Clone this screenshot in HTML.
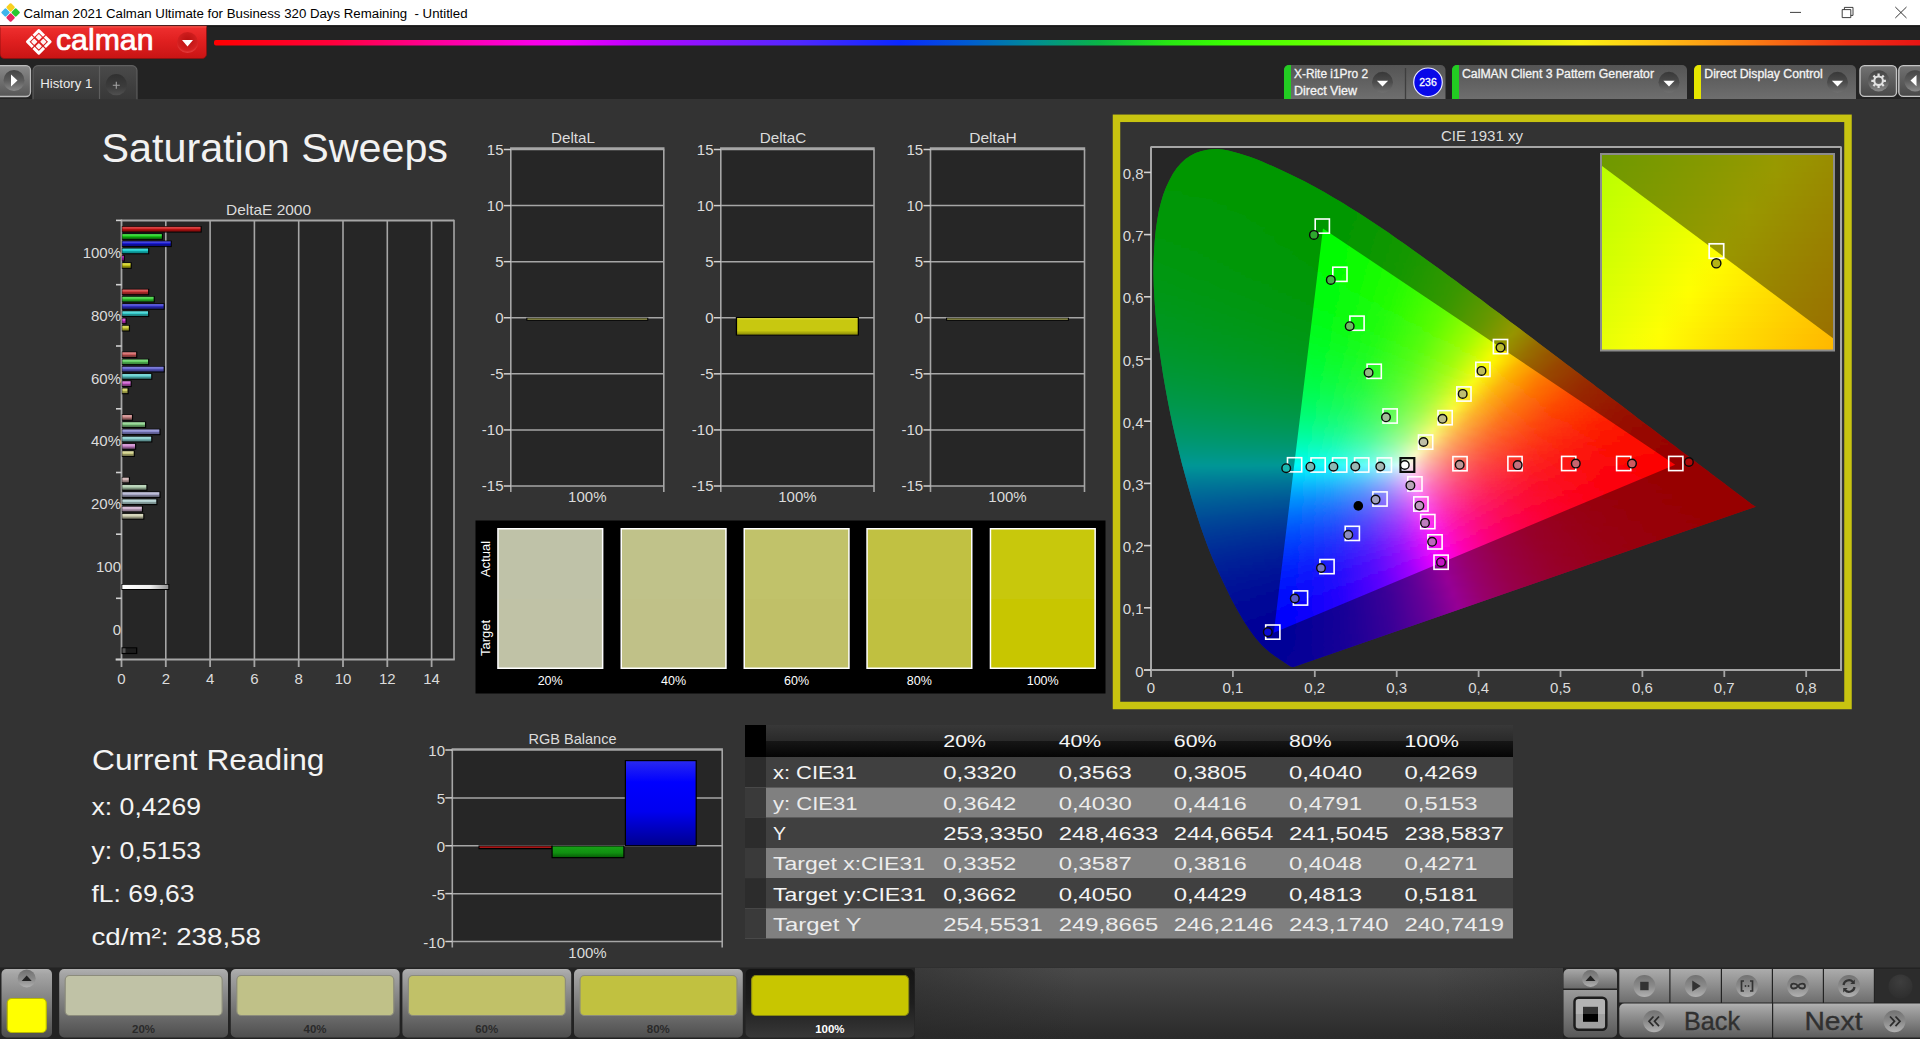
<!DOCTYPE html>
<html lang="en"><head><meta charset="utf-8"><title>Calman 2021 - Saturation Sweeps</title>
<style>
html,body{margin:0;padding:0;background:#333;overflow:hidden}
body{width:1920px;height:1039px;position:relative;font-family:'Liberation Sans', sans-serif}
svg{position:absolute;left:0;top:0;display:block}
text{font-family:'Liberation Sans', sans-serif;white-space:pre}
</style></head><body>
<svg width="1920" height="1039" viewBox="0 0 1920 1039">
<defs><linearGradient id="g1" x1="214" y1="0" x2="1920" y2="0" gradientUnits="userSpaceOnUse"><stop offset="0" stop-color="#ff0000"/><stop offset="0.07" stop-color="#ff003c"/><stop offset="0.128" stop-color="#ff0096"/><stop offset="0.187" stop-color="#fa00e6"/><stop offset="0.207" stop-color="#f000fa"/><stop offset="0.246" stop-color="#be00ff"/><stop offset="0.285" stop-color="#8c14ff"/><stop offset="0.343" stop-color="#5028ff"/><stop offset="0.402" stop-color="#0a28ff"/><stop offset="0.441" stop-color="#005ad2"/><stop offset="0.48" stop-color="#008c96"/><stop offset="0.519" stop-color="#0ab446"/><stop offset="0.559" stop-color="#28e614"/><stop offset="0.597" stop-color="#3cff00"/><stop offset="0.656" stop-color="#6eff00"/><stop offset="0.715" stop-color="#aaf414"/><stop offset="0.742" stop-color="#bef00a"/><stop offset="0.801" stop-color="#faf014"/><stop offset="0.84" stop-color="#ffc814"/><stop offset="0.899" stop-color="#fa8214"/><stop offset="0.957" stop-color="#f03214"/><stop offset="1" stop-color="#e61414"/></linearGradient><linearGradient id="g2" x1="0" y1="0" x2="0" y2="1"><stop offset="0" stop-color="#f03030"/><stop offset="0.45" stop-color="#e02020"/><stop offset="1" stop-color="#c81414"/></linearGradient><radialGradient id="g3" cx="0.5" cy="0.4" r="0.6"><stop offset="0" stop-color="#b81010"/><stop offset="0.8" stop-color="#d42020"/><stop offset="1" stop-color="#e84040"/></radialGradient><linearGradient id="g4" x1="0" y1="0" x2="0" y2="1"><stop offset="0" stop-color="#8a8a8a"/><stop offset="1" stop-color="#565656"/></linearGradient><linearGradient id="g5" x1="0" y1="0" x2="0" y2="1"><stop offset="0" stop-color="#444444"/><stop offset="0.5" stop-color="#5c5c5c"/><stop offset="1" stop-color="#8a8a8a"/></linearGradient><linearGradient id="g6" x1="0" y1="0" x2="0" y2="1"><stop offset="0" stop-color="#4a4a4a"/><stop offset="1" stop-color="#383838"/></linearGradient><linearGradient id="g7" x1="0" y1="0" x2="0" y2="1"><stop offset="0" stop-color="#303030"/><stop offset="0.6" stop-color="#3c3c3c"/><stop offset="1" stop-color="#505050"/></linearGradient><linearGradient id="g8" x1="0" y1="0" x2="0" y2="1"><stop offset="0" stop-color="#545454"/><stop offset="1" stop-color="#6e6e6e"/></linearGradient><linearGradient id="g9" x1="0" y1="0" x2="0" y2="1"><stop offset="0" stop-color="#383838"/><stop offset="0.5" stop-color="#4c4c4c"/><stop offset="1" stop-color="#707070"/></linearGradient><linearGradient id="g10" x1="0" y1="0" x2="0" y2="1"><stop offset="0" stop-color="#383838"/><stop offset="0.5" stop-color="#4c4c4c"/><stop offset="1" stop-color="#707070"/></linearGradient><linearGradient id="g11" x1="0" y1="0" x2="0" y2="1"><stop offset="0" stop-color="#383838"/><stop offset="0.5" stop-color="#4c4c4c"/><stop offset="1" stop-color="#707070"/></linearGradient><linearGradient id="g12" x1="0" y1="0" x2="0" y2="1"><stop offset="0" stop-color="#727272"/><stop offset="1" stop-color="#484848"/></linearGradient><linearGradient id="g13" x1="0" y1="0" x2="0" y2="1"><stop offset="0" stop-color="#444444"/><stop offset="0.5" stop-color="#5c5c5c"/><stop offset="1" stop-color="#8a8a8a"/></linearGradient><linearGradient id="g14" x1="0" y1="0" x2="1" y2="0"><stop offset="0" stop-color="#ffffff"/><stop offset="0.6" stop-color="#f0f0f0"/><stop offset="1" stop-color="#909090"/></linearGradient><linearGradient id="g15" x1="0" y1="0" x2="0" y2="1"><stop offset="0" stop-color="#e0e040"/><stop offset="0.12" stop-color="#c8c810"/><stop offset="0.75" stop-color="#c8c810"/><stop offset="1" stop-color="#8c8c08"/></linearGradient><clipPath id="cl"><path d="M1293.6 666.9L1292.5 667.0L1291.4 666.8L1290.5 666.4L1289.6 665.8L1288.6 665.2L1287.7 664.7L1286.7 664.0L1286.0 663.5L1285.2 662.9L1284.4 662.4L1283.5 661.8L1282.4 661.1L1281.2 660.3L1279.9 659.4L1278.6 658.5L1277.1 657.6L1276.3 657.0L1275.5 656.5L1274.7 655.9L1273.8 655.2L1272.9 654.6L1272.0 653.9L1271.0 653.2L1270.0 652.4L1268.9 651.5L1267.9 650.6L1266.8 649.7L1265.7 648.8L1264.5 647.7L1263.3 646.5L1262.0 645.2L1260.6 643.7L1259.1 642.1L1257.6 640.3L1256.0 638.4L1254.4 636.4L1252.6 634.0L1250.8 631.6L1249.0 628.9L1247.1 626.1L1245.0 623.1L1243.0 619.7L1240.8 616.0L1238.5 612.0L1236.1 607.8L1233.7 603.3L1231.1 598.4L1228.5 593.1L1225.8 587.5L1222.9 581.4L1219.9 575.0L1216.8 568.2L1213.6 561.0L1210.4 553.3L1207.3 545.2L1204.1 536.5L1200.9 527.4L1197.7 517.8L1194.5 507.7L1191.3 497.3L1188.2 486.5L1185.1 475.2L1181.9 463.4L1178.8 451.1L1175.8 438.6L1172.9 426.0L1170.2 413.3L1167.7 400.5L1165.3 387.4L1163.0 374.2L1161.0 360.9L1159.1 347.9L1157.6 335.1L1156.3 322.6L1155.2 310.1L1154.4 297.8L1153.8 285.7L1153.5 274.0L1153.6 262.7L1154.0 251.8L1154.7 241.1L1155.7 230.8L1157.1 220.9L1158.7 211.6L1160.8 202.9L1163.2 194.8L1166.1 187.3L1169.4 180.2L1172.9 173.8L1176.8 168.1L1181.0 163.2L1185.5 159.0L1190.4 155.7L1195.6 153.1L1200.9 151.3L1206.2 150.0L1211.6 149.3L1217.1 149.1L1222.6 149.6L1228.2 150.6L1233.8 152.0L1239.3 153.5L1244.8 155.2L1250.3 157.0L1255.8 159.0L1261.4 161.3L1266.9 163.7L1272.4 166.1L1277.8 168.5L1283.1 170.9L1288.4 173.4L1293.6 175.9L1298.7 178.5L1303.9 181.1L1309.0 183.8L1314.1 186.5L1319.1 189.3L1324.1 192.1L1329.1 195.0L1334.1 197.9L1339.0 200.8L1344.0 203.8L1349.0 206.9L1353.9 210.0L1358.8 213.1L1363.8 216.3L1368.7 219.5L1373.6 222.7L1378.5 226.0L1383.4 229.3L1388.3 232.6L1393.1 236.0L1398.0 239.4L1402.9 242.8L1407.8 246.2L1412.6 249.7L1417.5 253.2L1422.4 256.7L1427.2 260.2L1432.1 263.7L1437.0 267.2L1441.9 270.8L1446.8 274.4L1451.7 278.0L1456.6 281.6L1461.4 285.2L1466.3 288.8L1471.2 292.4L1476.0 296.0L1480.9 299.6L1485.7 303.3L1490.6 306.9L1495.4 310.5L1500.3 314.1L1505.1 317.8L1509.9 321.4L1514.7 325.0L1519.5 328.6L1524.3 332.2L1529.0 335.8L1533.7 339.3L1538.5 342.9L1543.1 346.4L1547.8 350.0L1552.4 353.5L1557.1 357.0L1561.7 360.5L1566.2 363.9L1570.7 367.3L1575.2 370.7L1579.7 374.1L1584.1 377.5L1588.5 380.8L1592.9 384.1L1597.2 387.4L1601.5 390.6L1605.7 393.8L1609.9 396.9L1614.0 400.0L1618.1 403.1L1622.1 406.1L1626.0 409.1L1629.9 412.1L1633.8 415.0L1637.5 417.9L1641.2 420.7L1644.8 423.4L1648.3 426.0L1651.7 428.6L1655.0 431.1L1658.2 433.5L1661.4 435.9L1664.5 438.3L1667.6 440.6L1670.6 442.9L1673.5 445.1L1676.4 447.3L1679.2 449.4L1681.9 451.4L1684.5 453.4L1687.0 455.3L1689.4 457.1L1691.8 458.9L1694.1 460.6L1696.3 462.3L1698.4 463.9L1700.5 465.4L1702.5 466.9L1704.4 468.4L1706.2 469.8L1708.0 471.1L1709.7 472.5L1711.4 473.7L1712.9 474.9L1714.5 476.1L1715.9 477.2L1717.3 478.2L1718.7 479.3L1720.0 480.3L1721.3 481.2L1722.5 482.1L1723.7 483.0L1724.8 483.8L1725.9 484.7L1726.9 485.5L1727.9 486.2L1728.9 487.0L1729.8 487.7L1730.8 488.4L1731.7 489.1L1732.5 489.7L1733.4 490.4L1734.2 491.0L1735.0 491.6L1735.8 492.2L1736.5 492.7L1737.2 493.3L1737.9 493.8L1739.2 494.8L1740.5 495.7L1741.6 496.6L1742.6 497.3L1743.6 498.1L1744.5 498.7L1745.2 499.3L1745.9 499.8L1746.9 500.6L1747.7 501.2L1748.5 501.7L1749.2 502.3L1749.9 502.8L1750.6 503.4L1751.4 504.0L1752.1 504.5L1755.8 506.7z"/></clipPath><filter id="bl" x="-2%" y="-2%" width="104%" height="104%"><feGaussianBlur stdDeviation="1.2"/></filter><linearGradient id="s0"><stop offset="0" stop-color="#00ff00"/><stop offset="1" stop-color="#00ff00"/></linearGradient><linearGradient id="s1"><stop offset="0" stop-color="#00ff01"/><stop offset="1" stop-color="#00ff00"/></linearGradient><linearGradient id="s2"><stop offset="0" stop-color="#00ff01"/><stop offset="1" stop-color="#00ff00"/></linearGradient><linearGradient id="s3"><stop offset="0" stop-color="#00ff01"/><stop offset="1" stop-color="#00ff00"/></linearGradient><linearGradient id="s4"><stop offset="0" stop-color="#00ff02"/><stop offset="1" stop-color="#00ff00"/></linearGradient><linearGradient id="s5"><stop offset="0" stop-color="#00ff02"/><stop offset="1" stop-color="#00ff00"/></linearGradient><linearGradient id="s6"><stop offset="0" stop-color="#00ff03"/><stop offset="1" stop-color="#00ff00"/></linearGradient><linearGradient id="s7"><stop offset="0" stop-color="#00ff03"/><stop offset="1" stop-color="#00ff00"/></linearGradient><linearGradient id="s8"><stop offset="0" stop-color="#00ff03"/><stop offset="1" stop-color="#00ff00"/></linearGradient><linearGradient id="s9"><stop offset="0" stop-color="#00ff04"/><stop offset="1" stop-color="#00ff00"/></linearGradient><linearGradient id="s10"><stop offset="0" stop-color="#00ff04"/><stop offset="1" stop-color="#00ff00"/></linearGradient><linearGradient id="s11"><stop offset="0" stop-color="#00ff05"/><stop offset="1" stop-color="#00ff00"/></linearGradient><linearGradient id="s12"><stop offset="0" stop-color="#00ff05"/><stop offset="1" stop-color="#00ff00"/></linearGradient><linearGradient id="s13"><stop offset="0" stop-color="#00ff06"/><stop offset="1" stop-color="#00ff00"/></linearGradient><linearGradient id="s14"><stop offset="0" stop-color="#00ff07"/><stop offset="1" stop-color="#01ff00"/></linearGradient><linearGradient id="s15"><stop offset="0" stop-color="#00ff07"/><stop offset="1" stop-color="#02ff00"/></linearGradient><linearGradient id="s16"><stop offset="0" stop-color="#00ff08"/><stop offset="1" stop-color="#03ff00"/></linearGradient><linearGradient id="s17"><stop offset="0" stop-color="#00ff08"/><stop offset="1" stop-color="#04ff00"/></linearGradient><linearGradient id="s18"><stop offset="0" stop-color="#00ff09"/><stop offset="0.962" stop-color="#03ff00"/><stop offset="1" stop-color="#05ff00"/></linearGradient><linearGradient id="s19"><stop offset="0" stop-color="#00ff0a"/><stop offset="0.926" stop-color="#03ff00"/><stop offset="1" stop-color="#07ff00"/></linearGradient><linearGradient id="s20"><stop offset="0" stop-color="#00ff0a"/><stop offset="0.929" stop-color="#04ff00"/><stop offset="1" stop-color="#09ff00"/></linearGradient><linearGradient id="s21"><stop offset="0" stop-color="#00ff0b"/><stop offset="0.893" stop-color="#03ff00"/><stop offset="1" stop-color="#0aff00"/></linearGradient><linearGradient id="s22"><stop offset="0" stop-color="#00ff0b"/><stop offset="0.862" stop-color="#03ff00"/><stop offset="1" stop-color="#0cff00"/></linearGradient><linearGradient id="s23"><stop offset="0" stop-color="#00ff0c"/><stop offset="0.862" stop-color="#04ff00"/><stop offset="1" stop-color="#0fff00"/></linearGradient><linearGradient id="s24"><stop offset="0" stop-color="#00ff0d"/><stop offset="0.833" stop-color="#03ff00"/><stop offset="1" stop-color="#11ff00"/></linearGradient><linearGradient id="s25"><stop offset="0" stop-color="#00ff0d"/><stop offset="0.833" stop-color="#04ff00"/><stop offset="1" stop-color="#13ff00"/></linearGradient><linearGradient id="s26"><stop offset="0" stop-color="#00ff0e"/><stop offset="0.806" stop-color="#04ff00"/><stop offset="1" stop-color="#16ff00"/></linearGradient><linearGradient id="s27"><stop offset="0" stop-color="#00ff0f"/><stop offset="0.774" stop-color="#03ff00"/><stop offset="1" stop-color="#18ff00"/></linearGradient><linearGradient id="s28"><stop offset="0" stop-color="#00ff10"/><stop offset="0.781" stop-color="#04ff00"/><stop offset="1" stop-color="#1bff00"/></linearGradient><linearGradient id="s29"><stop offset="0" stop-color="#00ff10"/><stop offset="0.758" stop-color="#04ff00"/><stop offset="1" stop-color="#1eff00"/></linearGradient><linearGradient id="s30"><stop offset="0" stop-color="#00ff11"/><stop offset="0.727" stop-color="#03ff00"/><stop offset="0.97" stop-color="#1dff00"/><stop offset="1" stop-color="#22ff00"/></linearGradient><linearGradient id="s31"><stop offset="0" stop-color="#00ff12"/><stop offset="0.735" stop-color="#04ff00"/><stop offset="1" stop-color="#25ff00"/></linearGradient><linearGradient id="s32"><stop offset="0" stop-color="#00ff13"/><stop offset="0.706" stop-color="#03ff00"/><stop offset="0.971" stop-color="#23ff00"/><stop offset="1" stop-color="#29ff00"/></linearGradient><linearGradient id="s33"><stop offset="0" stop-color="#00ff14"/><stop offset="0.686" stop-color="#03ff00"/><stop offset="0.914" stop-color="#1dff00"/><stop offset="1" stop-color="#2cff00"/></linearGradient><linearGradient id="s34"><stop offset="0" stop-color="#00ff15"/><stop offset="0.686" stop-color="#03ff00"/><stop offset="0.943" stop-color="#25ff00"/><stop offset="1" stop-color="#30ff00"/></linearGradient><linearGradient id="s35"><stop offset="0" stop-color="#00ff16"/><stop offset="0.667" stop-color="#03ff01"/><stop offset="0.917" stop-color="#23ff00"/><stop offset="1" stop-color="#35ff00"/></linearGradient><linearGradient id="s36"><stop offset="0" stop-color="#00ff17"/><stop offset="0.667" stop-color="#04ff01"/><stop offset="0.889" stop-color="#21ff00"/><stop offset="1" stop-color="#39ff00"/></linearGradient><linearGradient id="s37"><stop offset="0" stop-color="#00ff18"/><stop offset="0.649" stop-color="#03ff01"/><stop offset="0.892" stop-color="#25ff00"/><stop offset="1" stop-color="#3eff00"/></linearGradient><linearGradient id="s38"><stop offset="0" stop-color="#00ff19"/><stop offset="0.649" stop-color="#04ff01"/><stop offset="0.865" stop-color="#23ff00"/><stop offset="1" stop-color="#43ff00"/></linearGradient><linearGradient id="s39"><stop offset="0" stop-color="#00ff1a"/><stop offset="0.632" stop-color="#04ff02"/><stop offset="0.842" stop-color="#21ff00"/><stop offset="1" stop-color="#48ff00"/></linearGradient><linearGradient id="s40"><stop offset="0" stop-color="#00ff1b"/><stop offset="0.632" stop-color="#04ff02"/><stop offset="0.868" stop-color="#2aff00"/><stop offset="1" stop-color="#4eff00"/></linearGradient><linearGradient id="s41"><stop offset="0" stop-color="#00ff1c"/><stop offset="0.615" stop-color="#04ff03"/><stop offset="0.821" stop-color="#23ff00"/><stop offset="1" stop-color="#54ff00"/></linearGradient><linearGradient id="s42"><stop offset="0" stop-color="#00ff1d"/><stop offset="0.59" stop-color="#03ff04"/><stop offset="0.795" stop-color="#21ff00"/><stop offset="1" stop-color="#5aff00"/></linearGradient><linearGradient id="s43"><stop offset="0" stop-color="#00ff1e"/><stop offset="0.6" stop-color="#04ff04"/><stop offset="0.8" stop-color="#25ff00"/><stop offset="1" stop-color="#61ff00"/></linearGradient><linearGradient id="s44"><stop offset="0" stop-color="#00ff1f"/><stop offset="0.575" stop-color="#03ff05"/><stop offset="0.775" stop-color="#22ff00"/><stop offset="0.975" stop-color="#5eff00"/><stop offset="1" stop-color="#68ff00"/></linearGradient><linearGradient id="s45"><stop offset="0" stop-color="#00ff20"/><stop offset="0.561" stop-color="#02ff06"/><stop offset="0.756" stop-color="#21ff00"/><stop offset="0.951" stop-color="#5bff00"/><stop offset="1" stop-color="#6fff00"/></linearGradient><linearGradient id="s46"><stop offset="0" stop-color="#00ff22"/><stop offset="0.561" stop-color="#03ff07"/><stop offset="0.756" stop-color="#24ff00"/><stop offset="0.927" stop-color="#58ff00"/><stop offset="1" stop-color="#77ff00"/></linearGradient><linearGradient id="s47"><stop offset="0" stop-color="#00ff23"/><stop offset="0.548" stop-color="#03ff08"/><stop offset="0.738" stop-color="#22ff01"/><stop offset="0.929" stop-color="#5fff00"/><stop offset="1" stop-color="#7fff00"/></linearGradient><linearGradient id="s48"><stop offset="0" stop-color="#00ff24"/><stop offset="0.548" stop-color="#04ff08"/><stop offset="0.738" stop-color="#25ff01"/><stop offset="0.905" stop-color="#5cff00"/><stop offset="1" stop-color="#88ff00"/></linearGradient><linearGradient id="s49"><stop offset="0" stop-color="#00ff26"/><stop offset="0.535" stop-color="#03ff09"/><stop offset="0.721" stop-color="#24ff01"/><stop offset="0.907" stop-color="#63ff00"/><stop offset="1" stop-color="#91ff00"/></linearGradient><linearGradient id="s50"><stop offset="0" stop-color="#00ff27"/><stop offset="0.535" stop-color="#04ff0a"/><stop offset="0.698" stop-color="#21ff02"/><stop offset="0.86" stop-color="#56ff00"/><stop offset="1" stop-color="#9bff00"/></linearGradient><linearGradient id="s51"><stop offset="0" stop-color="#00ff29"/><stop offset="0.523" stop-color="#03ff0b"/><stop offset="0.705" stop-color="#26ff02"/><stop offset="0.864" stop-color="#5eff00"/><stop offset="1" stop-color="#a5ff00"/></linearGradient><linearGradient id="s52"><stop offset="0" stop-color="#00ff2a"/><stop offset="0.523" stop-color="#04ff0c"/><stop offset="0.682" stop-color="#23ff03"/><stop offset="0.841" stop-color="#5aff00"/><stop offset="0.977" stop-color="#a1ff00"/><stop offset="1" stop-color="#b0ff00"/></linearGradient><linearGradient id="s53"><stop offset="0" stop-color="#00ff2c"/><stop offset="0.511" stop-color="#04ff0d"/><stop offset="0.667" stop-color="#21ff05"/><stop offset="0.822" stop-color="#58ff00"/><stop offset="0.956" stop-color="#9eff00"/><stop offset="1" stop-color="#bcff00"/></linearGradient><linearGradient id="s54"><stop offset="0" stop-color="#00ff2d"/><stop offset="0.489" stop-color="#02ff0f"/><stop offset="0.667" stop-color="#24ff05"/><stop offset="0.822" stop-color="#5eff00"/><stop offset="0.956" stop-color="#a9ff00"/><stop offset="1" stop-color="#c8ff00"/></linearGradient><linearGradient id="s55"><stop offset="0" stop-color="#00ff2f"/><stop offset="0.5" stop-color="#04ff0f"/><stop offset="0.652" stop-color="#23ff06"/><stop offset="0.804" stop-color="#5cff00"/><stop offset="0.935" stop-color="#a6ff00"/><stop offset="1" stop-color="#d5ff00"/></linearGradient><linearGradient id="s56"><stop offset="0" stop-color="#00ff30"/><stop offset="0.478" stop-color="#02ff12"/><stop offset="0.652" stop-color="#26ff07"/><stop offset="0.804" stop-color="#62ff00"/><stop offset="0.935" stop-color="#b1ff00"/><stop offset="1" stop-color="#e3ff00"/></linearGradient><linearGradient id="s57"><stop offset="0" stop-color="#00ff32"/><stop offset="0.489" stop-color="#04ff12"/><stop offset="0.66" stop-color="#2cff07"/><stop offset="0.809" stop-color="#6bff00"/><stop offset="0.936" stop-color="#bdff00"/><stop offset="1" stop-color="#f2ff00"/></linearGradient><linearGradient id="s58"><stop offset="0" stop-color="#00ff34"/><stop offset="0.468" stop-color="#03ff14"/><stop offset="0.617" stop-color="#21ff0a"/><stop offset="0.766" stop-color="#5cff01"/><stop offset="0.894" stop-color="#a9ff00"/><stop offset="1" stop-color="#fffc00"/></linearGradient><linearGradient id="s59"><stop offset="0" stop-color="#00ff36"/><stop offset="0.458" stop-color="#02ff16"/><stop offset="0.604" stop-color="#20ff0b"/><stop offset="0.75" stop-color="#5aff02"/><stop offset="0.875" stop-color="#a6ff00"/><stop offset="0.979" stop-color="#ffff00"/><stop offset="1" stop-color="#ffec00"/></linearGradient><linearGradient id="s60"><stop offset="0" stop-color="#00ff38"/><stop offset="0.458" stop-color="#03ff17"/><stop offset="0.604" stop-color="#23ff0c"/><stop offset="0.729" stop-color="#55ff04"/><stop offset="0.854" stop-color="#a1ff00"/><stop offset="0.958" stop-color="#faff00"/><stop offset="1" stop-color="#ffdd00"/></linearGradient><linearGradient id="s61"><stop offset="0" stop-color="#00ff39"/><stop offset="0.449" stop-color="#03ff19"/><stop offset="0.592" stop-color="#22ff0e"/><stop offset="0.735" stop-color="#5eff04"/><stop offset="0.857" stop-color="#aeff00"/><stop offset="0.939" stop-color="#f7ff00"/><stop offset="0.98" stop-color="#ffe000"/><stop offset="1" stop-color="#ffd000"/></linearGradient><linearGradient id="s62"><stop offset="0" stop-color="#00ff3b"/><stop offset="0.449" stop-color="#03ff1a"/><stop offset="0.592" stop-color="#25ff0f"/><stop offset="0.714" stop-color="#59ff05"/><stop offset="0.837" stop-color="#a9ff00"/><stop offset="0.918" stop-color="#f2ff00"/><stop offset="0.939" stop-color="#fff700"/><stop offset="1" stop-color="#ffc300"/></linearGradient><linearGradient id="s63"><stop offset="0" stop-color="#00ff3d"/><stop offset="0.44" stop-color="#03ff1c"/><stop offset="0.56" stop-color="#1dff12"/><stop offset="0.68" stop-color="#4dff08"/><stop offset="0.8" stop-color="#97ff01"/><stop offset="0.92" stop-color="#fffb00"/><stop offset="1" stop-color="#ffb600"/></linearGradient><linearGradient id="s64"><stop offset="0" stop-color="#00ff3f"/><stop offset="0.44" stop-color="#04ff1d"/><stop offset="0.58" stop-color="#27ff11"/><stop offset="0.7" stop-color="#5eff07"/><stop offset="0.82" stop-color="#b1ff00"/><stop offset="0.9" stop-color="#feff00"/><stop offset="0.98" stop-color="#ffb900"/><stop offset="1" stop-color="#ffab00"/></linearGradient><linearGradient id="s65"><stop offset="0" stop-color="#00ff42"/><stop offset="0.431" stop-color="#03ff1f"/><stop offset="0.569" stop-color="#26ff13"/><stop offset="0.686" stop-color="#5cff09"/><stop offset="0.784" stop-color="#9fff02"/><stop offset="0.882" stop-color="#fbff00"/><stop offset="0.98" stop-color="#ffad00"/><stop offset="1" stop-color="#ffa000"/></linearGradient><linearGradient id="s66"><stop offset="0" stop-color="#00ff44"/><stop offset="0.431" stop-color="#04ff21"/><stop offset="0.549" stop-color="#21ff16"/><stop offset="0.667" stop-color="#57ff0c"/><stop offset="0.784" stop-color="#a9ff02"/><stop offset="0.863" stop-color="#f5ff00"/><stop offset="0.882" stop-color="#fff300"/><stop offset="0.961" stop-color="#ffaf00"/><stop offset="1" stop-color="#ff9600"/></linearGradient><linearGradient id="s67"><stop offset="0" stop-color="#00ff46"/><stop offset="0.423" stop-color="#04ff23"/><stop offset="0.538" stop-color="#21ff18"/><stop offset="0.654" stop-color="#55ff0d"/><stop offset="0.769" stop-color="#a7ff04"/><stop offset="0.846" stop-color="#f2ff00"/><stop offset="0.865" stop-color="#fff600"/><stop offset="0.942" stop-color="#ffb100"/><stop offset="1" stop-color="#ff8c00"/></linearGradient><linearGradient id="s68"><stop offset="0" stop-color="#00ff48"/><stop offset="0.423" stop-color="#04ff25"/><stop offset="0.538" stop-color="#23ff1a"/><stop offset="0.654" stop-color="#5bff0e"/><stop offset="0.75" stop-color="#a1ff06"/><stop offset="0.846" stop-color="#fffc00"/><stop offset="0.923" stop-color="#ffb300"/><stop offset="1" stop-color="#ff8300"/></linearGradient><linearGradient id="s69"><stop offset="0" stop-color="#00ff4b"/><stop offset="0.415" stop-color="#04ff27"/><stop offset="0.528" stop-color="#22ff1c"/><stop offset="0.642" stop-color="#5aff11"/><stop offset="0.736" stop-color="#9fff07"/><stop offset="0.83" stop-color="#fffe00"/><stop offset="0.906" stop-color="#ffb500"/><stop offset="1" stop-color="#ff7a00"/></linearGradient><linearGradient id="s70"><stop offset="0" stop-color="#00ff4d"/><stop offset="0.396" stop-color="#02ff2b"/><stop offset="0.528" stop-color="#25ff1e"/><stop offset="0.642" stop-color="#60ff12"/><stop offset="0.736" stop-color="#a9ff08"/><stop offset="0.811" stop-color="#f9ff02"/><stop offset="0.868" stop-color="#ffc900"/><stop offset="0.943" stop-color="#ff9000"/><stop offset="1" stop-color="#ff7200"/></linearGradient><linearGradient id="s71"><stop offset="0" stop-color="#00ff50"/><stop offset="0.389" stop-color="#02ff2e"/><stop offset="0.5" stop-color="#1dff22"/><stop offset="0.611" stop-color="#53ff16"/><stop offset="0.704" stop-color="#97ff0c"/><stop offset="0.778" stop-color="#e1ff05"/><stop offset="0.796" stop-color="#f7ff03"/><stop offset="0.833" stop-color="#ffdc01"/><stop offset="0.926" stop-color="#ff9100"/><stop offset="1" stop-color="#ff6a00"/></linearGradient><linearGradient id="s72"><stop offset="0" stop-color="#00ff52"/><stop offset="0.389" stop-color="#02ff30"/><stop offset="0.5" stop-color="#20ff24"/><stop offset="0.611" stop-color="#59ff17"/><stop offset="0.704" stop-color="#a1ff0d"/><stop offset="0.778" stop-color="#f0ff05"/><stop offset="0.796" stop-color="#fff703"/><stop offset="0.87" stop-color="#ffae00"/><stop offset="0.963" stop-color="#ff7400"/><stop offset="1" stop-color="#ff6300"/></linearGradient><linearGradient id="s73"><stop offset="0" stop-color="#00ff55"/><stop offset="0.382" stop-color="#02ff32"/><stop offset="0.491" stop-color="#1fff27"/><stop offset="0.6" stop-color="#58ff1a"/><stop offset="0.691" stop-color="#a0ff0f"/><stop offset="0.764" stop-color="#eeff07"/><stop offset="0.782" stop-color="#fff905"/><stop offset="0.855" stop-color="#ffaf00"/><stop offset="0.945" stop-color="#ff7400"/><stop offset="1" stop-color="#ff5c00"/></linearGradient><linearGradient id="s74"><stop offset="0" stop-color="#00ff58"/><stop offset="0.382" stop-color="#03ff35"/><stop offset="0.491" stop-color="#22ff28"/><stop offset="0.6" stop-color="#5eff1b"/><stop offset="0.691" stop-color="#aaff10"/><stop offset="0.764" stop-color="#feff08"/><stop offset="0.836" stop-color="#ffb201"/><stop offset="0.927" stop-color="#ff7500"/><stop offset="1" stop-color="#ff5500"/></linearGradient><linearGradient id="s75"><stop offset="0" stop-color="#00ff5a"/><stop offset="0.375" stop-color="#03ff38"/><stop offset="0.482" stop-color="#22ff2b"/><stop offset="0.589" stop-color="#5dff1e"/><stop offset="0.679" stop-color="#a9ff13"/><stop offset="0.75" stop-color="#fdff0a"/><stop offset="0.821" stop-color="#ffb302"/><stop offset="0.911" stop-color="#ff7600"/><stop offset="1" stop-color="#ff4f00"/></linearGradient><linearGradient id="s76"><stop offset="0" stop-color="#00ff5d"/><stop offset="0.375" stop-color="#04ff3a"/><stop offset="0.482" stop-color="#25ff2e"/><stop offset="0.571" stop-color="#57ff22"/><stop offset="0.661" stop-color="#a2ff17"/><stop offset="0.732" stop-color="#f5ff0d"/><stop offset="0.75" stop-color="#fff10a"/><stop offset="0.804" stop-color="#ffb703"/><stop offset="0.893" stop-color="#ff7700"/><stop offset="1" stop-color="#ff4900"/></linearGradient><linearGradient id="s77"><stop offset="0" stop-color="#00ff60"/><stop offset="0.357" stop-color="#02ff3e"/><stop offset="0.464" stop-color="#20ff32"/><stop offset="0.571" stop-color="#5dff24"/><stop offset="0.661" stop-color="#adff18"/><stop offset="0.714" stop-color="#edff11"/><stop offset="0.732" stop-color="#fff80e"/><stop offset="0.786" stop-color="#ffbb05"/><stop offset="0.857" stop-color="#ff8400"/><stop offset="0.964" stop-color="#ff5000"/><stop offset="1" stop-color="#ff4400"/></linearGradient><linearGradient id="s78"><stop offset="0" stop-color="#00ff63"/><stop offset="0.368" stop-color="#04ff40"/><stop offset="0.474" stop-color="#28ff33"/><stop offset="0.579" stop-color="#6aff25"/><stop offset="0.667" stop-color="#c0ff19"/><stop offset="0.719" stop-color="#fff911"/><stop offset="0.772" stop-color="#ffbc07"/><stop offset="0.842" stop-color="#ff8401"/><stop offset="0.947" stop-color="#ff5000"/><stop offset="1" stop-color="#ff3e00"/></linearGradient><linearGradient id="s79"><stop offset="0" stop-color="#00ff66"/><stop offset="0.351" stop-color="#02ff45"/><stop offset="0.439" stop-color="#1bff3a"/><stop offset="0.526" stop-color="#4aff2f"/><stop offset="0.614" stop-color="#92ff22"/><stop offset="0.684" stop-color="#e4ff18"/><stop offset="0.702" stop-color="#fdff15"/><stop offset="0.772" stop-color="#ffb007"/><stop offset="0.842" stop-color="#ff7b01"/><stop offset="0.947" stop-color="#ff4a00"/><stop offset="1" stop-color="#ff3900"/></linearGradient><linearGradient id="s80"><stop offset="0" stop-color="#00ff69"/><stop offset="0.345" stop-color="#02ff48"/><stop offset="0.448" stop-color="#22ff3b"/><stop offset="0.534" stop-color="#56ff30"/><stop offset="0.603" stop-color="#92ff26"/><stop offset="0.672" stop-color="#e3ff1b"/><stop offset="0.69" stop-color="#fcff18"/><stop offset="0.759" stop-color="#ffb009"/><stop offset="0.828" stop-color="#ff7b02"/><stop offset="0.931" stop-color="#ff4a00"/><stop offset="1" stop-color="#ff3500"/></linearGradient><linearGradient id="s81"><stop offset="0" stop-color="#00ff6d"/><stop offset="0.345" stop-color="#03ff4b"/><stop offset="0.448" stop-color="#25ff3e"/><stop offset="0.534" stop-color="#5cff32"/><stop offset="0.621" stop-color="#afff25"/><stop offset="0.672" stop-color="#f3ff1d"/><stop offset="0.69" stop-color="#fff119"/><stop offset="0.741" stop-color="#ffb40c"/><stop offset="0.828" stop-color="#ff7202"/><stop offset="0.931" stop-color="#ff4400"/><stop offset="1" stop-color="#ff3000"/></linearGradient><linearGradient id="s82"><stop offset="0" stop-color="#00ff70"/><stop offset="0.339" stop-color="#02ff4f"/><stop offset="0.441" stop-color="#25ff42"/><stop offset="0.525" stop-color="#5cff36"/><stop offset="0.593" stop-color="#9cff2c"/><stop offset="0.661" stop-color="#f3ff21"/><stop offset="0.678" stop-color="#fff21c"/><stop offset="0.729" stop-color="#ffb40f"/><stop offset="0.814" stop-color="#ff7203"/><stop offset="0.932" stop-color="#ff3e00"/><stop offset="1" stop-color="#ff2c00"/></linearGradient><linearGradient id="s83"><stop offset="0" stop-color="#00ff74"/><stop offset="0.339" stop-color="#03ff52"/><stop offset="0.441" stop-color="#28ff45"/><stop offset="0.525" stop-color="#63ff39"/><stop offset="0.593" stop-color="#a7ff2e"/><stop offset="0.661" stop-color="#fffa22"/><stop offset="0.712" stop-color="#ffb913"/><stop offset="0.78" stop-color="#ff7f07"/><stop offset="0.881" stop-color="#ff4b00"/><stop offset="1" stop-color="#ff2800"/></linearGradient><linearGradient id="s84"><stop offset="0" stop-color="#00ff77"/><stop offset="0.339" stop-color="#04ff56"/><stop offset="0.441" stop-color="#2cff49"/><stop offset="0.525" stop-color="#6aff3c"/><stop offset="0.593" stop-color="#b3ff31"/><stop offset="0.644" stop-color="#faff28"/><stop offset="0.712" stop-color="#ffad13"/><stop offset="0.78" stop-color="#ff7607"/><stop offset="0.881" stop-color="#ff4500"/><stop offset="1" stop-color="#ff2400"/></linearGradient><linearGradient id="s85"><stop offset="0" stop-color="#00ff7b"/><stop offset="0.333" stop-color="#04ff5a"/><stop offset="0.417" stop-color="#23ff50"/><stop offset="0.5" stop-color="#5bff43"/><stop offset="0.567" stop-color="#9eff39"/><stop offset="0.633" stop-color="#faff2d"/><stop offset="0.7" stop-color="#ffac16"/><stop offset="0.767" stop-color="#ff7609"/><stop offset="0.867" stop-color="#ff4500"/><stop offset="1" stop-color="#ff2100"/></linearGradient><linearGradient id="s86"><stop offset="0" stop-color="#00ff7f"/><stop offset="0.317" stop-color="#02ff60"/><stop offset="0.4" stop-color="#1eff56"/><stop offset="0.483" stop-color="#54ff4a"/><stop offset="0.567" stop-color="#a9ff3c"/><stop offset="0.617" stop-color="#f1ff33"/><stop offset="0.633" stop-color="#fff22d"/><stop offset="0.683" stop-color="#ffb11a"/><stop offset="0.75" stop-color="#ff780b"/><stop offset="0.85" stop-color="#ff4501"/><stop offset="1" stop-color="#ff1e00"/></linearGradient><linearGradient id="s87"><stop offset="0" stop-color="#00ff83"/><stop offset="0.311" stop-color="#02ff65"/><stop offset="0.393" stop-color="#1dff5a"/><stop offset="0.475" stop-color="#53ff4f"/><stop offset="0.541" stop-color="#95ff44"/><stop offset="0.607" stop-color="#f1ff38"/><stop offset="0.623" stop-color="#fff232"/><stop offset="0.672" stop-color="#ffb11e"/><stop offset="0.738" stop-color="#ff780d"/><stop offset="0.82" stop-color="#ff4b03"/><stop offset="0.951" stop-color="#ff2400"/><stop offset="1" stop-color="#ff1b00"/></linearGradient><linearGradient id="s88"><stop offset="0" stop-color="#00ff87"/><stop offset="0.311" stop-color="#02ff69"/><stop offset="0.393" stop-color="#20ff5f"/><stop offset="0.475" stop-color="#5aff53"/><stop offset="0.541" stop-color="#a0ff48"/><stop offset="0.607" stop-color="#fffb3b"/><stop offset="0.656" stop-color="#ffb623"/><stop offset="0.721" stop-color="#ff7a11"/><stop offset="0.82" stop-color="#ff4503"/><stop offset="0.967" stop-color="#ff1d00"/><stop offset="1" stop-color="#ff1800"/></linearGradient><linearGradient id="s89"><stop offset="0" stop-color="#00ff8c"/><stop offset="0.306" stop-color="#02ff6e"/><stop offset="0.387" stop-color="#20ff64"/><stop offset="0.468" stop-color="#5aff58"/><stop offset="0.532" stop-color="#a0ff4d"/><stop offset="0.597" stop-color="#fffb40"/><stop offset="0.645" stop-color="#ffb627"/><stop offset="0.71" stop-color="#ff7a13"/><stop offset="0.79" stop-color="#ff4c06"/><stop offset="0.919" stop-color="#ff2300"/><stop offset="1" stop-color="#ff1500"/></linearGradient><linearGradient id="s90"><stop offset="0" stop-color="#00ff90"/><stop offset="0.306" stop-color="#03ff73"/><stop offset="0.387" stop-color="#23ff69"/><stop offset="0.468" stop-color="#61ff5d"/><stop offset="0.532" stop-color="#acff52"/><stop offset="0.581" stop-color="#f9ff49"/><stop offset="0.629" stop-color="#ffbc2e"/><stop offset="0.694" stop-color="#ff7c17"/><stop offset="0.79" stop-color="#ff4506"/><stop offset="0.919" stop-color="#ff2000"/><stop offset="1" stop-color="#ff1200"/></linearGradient><linearGradient id="s91"><stop offset="0" stop-color="#00ff95"/><stop offset="0.306" stop-color="#04ff78"/><stop offset="0.387" stop-color="#27ff6e"/><stop offset="0.452" stop-color="#59ff64"/><stop offset="0.516" stop-color="#a2ff59"/><stop offset="0.565" stop-color="#edff50"/><stop offset="0.581" stop-color="#fff34a"/><stop offset="0.629" stop-color="#ffae2e"/><stop offset="0.694" stop-color="#ff7317"/><stop offset="0.79" stop-color="#ff4006"/><stop offset="0.935" stop-color="#ff1900"/><stop offset="1" stop-color="#ff1000"/></linearGradient><linearGradient id="s92"><stop offset="0" stop-color="#00ff9a"/><stop offset="0.302" stop-color="#04ff7e"/><stop offset="0.381" stop-color="#27ff74"/><stop offset="0.444" stop-color="#59ff6a"/><stop offset="0.508" stop-color="#a3ff60"/><stop offset="0.556" stop-color="#efff57"/><stop offset="0.571" stop-color="#fff250"/><stop offset="0.619" stop-color="#ffad32"/><stop offset="0.683" stop-color="#ff721a"/><stop offset="0.778" stop-color="#ff3f08"/><stop offset="0.905" stop-color="#ff1c00"/><stop offset="1" stop-color="#ff0e00"/></linearGradient><linearGradient id="s93"><stop offset="0" stop-color="#00ff9f"/><stop offset="0.286" stop-color="#01ff85"/><stop offset="0.349" stop-color="#18ff7d"/><stop offset="0.413" stop-color="#43ff75"/><stop offset="0.476" stop-color="#84ff6b"/><stop offset="0.524" stop-color="#c8ff63"/><stop offset="0.556" stop-color="#fffd5c"/><stop offset="0.603" stop-color="#ffb33a"/><stop offset="0.667" stop-color="#ff751f"/><stop offset="0.746" stop-color="#ff460c"/><stop offset="0.873" stop-color="#ff1f01"/><stop offset="1" stop-color="#ff0c00"/></linearGradient><linearGradient id="s94"><stop offset="0" stop-color="#00ffa4"/><stop offset="0.281" stop-color="#01ff8b"/><stop offset="0.344" stop-color="#18ff84"/><stop offset="0.406" stop-color="#43ff7c"/><stop offset="0.469" stop-color="#85ff72"/><stop offset="0.531" stop-color="#e5ff67"/><stop offset="0.547" stop-color="#fffb63"/><stop offset="0.594" stop-color="#ffb23f"/><stop offset="0.656" stop-color="#ff7422"/><stop offset="0.734" stop-color="#ff460f"/><stop offset="0.859" stop-color="#ff1e01"/><stop offset="1" stop-color="#ff0a00"/></linearGradient><linearGradient id="s95"><stop offset="0" stop-color="#00ffa9"/><stop offset="0.281" stop-color="#02ff91"/><stop offset="0.359" stop-color="#24ff88"/><stop offset="0.422" stop-color="#58ff80"/><stop offset="0.484" stop-color="#a6ff76"/><stop offset="0.531" stop-color="#f7ff6e"/><stop offset="0.562" stop-color="#ffcf54"/><stop offset="0.609" stop-color="#ff9436"/><stop offset="0.672" stop-color="#ff601d"/><stop offset="0.781" stop-color="#ff2f08"/><stop offset="0.922" stop-color="#ff1100"/><stop offset="1" stop-color="#ff0800"/></linearGradient><linearGradient id="s96"><stop offset="0" stop-color="#00ffaf"/><stop offset="0.277" stop-color="#02ff98"/><stop offset="0.354" stop-color="#24ff8f"/><stop offset="0.415" stop-color="#58ff87"/><stop offset="0.477" stop-color="#a7ff7e"/><stop offset="0.523" stop-color="#f9ff76"/><stop offset="0.569" stop-color="#ffb74e"/><stop offset="0.631" stop-color="#ff752c"/><stop offset="0.723" stop-color="#ff3f11"/><stop offset="0.846" stop-color="#ff1a02"/><stop offset="1" stop-color="#ff0600"/></linearGradient><linearGradient id="s97"><stop offset="0" stop-color="#00ffb4"/><stop offset="0.277" stop-color="#03ff9f"/><stop offset="0.338" stop-color="#1eff98"/><stop offset="0.4" stop-color="#50ff91"/><stop offset="0.462" stop-color="#9cff88"/><stop offset="0.508" stop-color="#ecff80"/><stop offset="0.523" stop-color="#fff277"/><stop offset="0.569" stop-color="#ffa94d"/><stop offset="0.631" stop-color="#ff6c2b"/><stop offset="0.723" stop-color="#ff3911"/><stop offset="0.862" stop-color="#ff1501"/><stop offset="1" stop-color="#ff0500"/></linearGradient><linearGradient id="s98"><stop offset="0" stop-color="#00ffba"/><stop offset="0.277" stop-color="#04ffa6"/><stop offset="0.338" stop-color="#22ffa0"/><stop offset="0.4" stop-color="#57ff98"/><stop offset="0.462" stop-color="#a9ff90"/><stop offset="0.508" stop-color="#ffff88"/><stop offset="0.538" stop-color="#ffc666"/><stop offset="0.585" stop-color="#ff8b42"/><stop offset="0.646" stop-color="#ff5925"/><stop offset="0.738" stop-color="#ff2e0e"/><stop offset="0.877" stop-color="#ff1001"/><stop offset="1" stop-color="#ff0400"/></linearGradient><linearGradient id="s99"><stop offset="0" stop-color="#00ffc0"/><stop offset="0.273" stop-color="#04ffae"/><stop offset="0.333" stop-color="#22ffa8"/><stop offset="0.394" stop-color="#57ffa1"/><stop offset="0.455" stop-color="#abff99"/><stop offset="0.5" stop-color="#fffc90"/><stop offset="0.545" stop-color="#ffae5e"/><stop offset="0.591" stop-color="#ff7b3e"/><stop offset="0.652" stop-color="#ff4f23"/><stop offset="0.758" stop-color="#ff240b"/><stop offset="0.924" stop-color="#ff0800"/><stop offset="1" stop-color="#ff0300"/></linearGradient><linearGradient id="s100"><stop offset="0" stop-color="#00ffc7"/><stop offset="0.258" stop-color="#01ffb7"/><stop offset="0.318" stop-color="#1bffb2"/><stop offset="0.379" stop-color="#4effac"/><stop offset="0.424" stop-color="#87ffa6"/><stop offset="0.47" stop-color="#d5ffa0"/><stop offset="0.485" stop-color="#f4ff9e"/><stop offset="0.5" stop-color="#ffe98e"/><stop offset="0.545" stop-color="#ffa05d"/><stop offset="0.606" stop-color="#ff6536"/><stop offset="0.682" stop-color="#ff3a1a"/><stop offset="0.803" stop-color="#ff1606"/><stop offset="1" stop-color="#ff0200"/></linearGradient><linearGradient id="s101"><stop offset="0" stop-color="#00ffce"/><stop offset="0.254" stop-color="#01ffbf"/><stop offset="0.313" stop-color="#1bffbb"/><stop offset="0.373" stop-color="#4fffb5"/><stop offset="0.433" stop-color="#a1ffaf"/><stop offset="0.478" stop-color="#f8ffa9"/><stop offset="0.507" stop-color="#ffca82"/><stop offset="0.552" stop-color="#ff8c56"/><stop offset="0.612" stop-color="#ff5832"/><stop offset="0.701" stop-color="#ff2d15"/><stop offset="0.836" stop-color="#ff0e03"/><stop offset="1" stop-color="#ff0100"/></linearGradient><linearGradient id="s102"><stop offset="0" stop-color="#00ffd5"/><stop offset="0.254" stop-color="#02ffc8"/><stop offset="0.313" stop-color="#1fffc4"/><stop offset="0.373" stop-color="#56ffbf"/><stop offset="0.433" stop-color="#aeffb9"/><stop offset="0.463" stop-color="#eaffb6"/><stop offset="0.478" stop-color="#fff2ab"/><stop offset="0.522" stop-color="#ffa470"/><stop offset="0.582" stop-color="#ff6641"/><stop offset="0.657" stop-color="#ff3921"/><stop offset="0.776" stop-color="#ff1509"/><stop offset="0.97" stop-color="#ff0100"/><stop offset="1" stop-color="#ff0000"/></linearGradient><linearGradient id="s103"><stop offset="0" stop-color="#00ffdc"/><stop offset="0.254" stop-color="#03ffd1"/><stop offset="0.313" stop-color="#23ffce"/><stop offset="0.373" stop-color="#5effca"/><stop offset="0.418" stop-color="#a1ffc6"/><stop offset="0.463" stop-color="#feffc2"/><stop offset="0.493" stop-color="#ffc392"/><stop offset="0.537" stop-color="#ff8561"/><stop offset="0.597" stop-color="#ff5339"/><stop offset="0.687" stop-color="#ff2919"/><stop offset="0.806" stop-color="#ff0e06"/><stop offset="1" stop-color="#ff0000"/></linearGradient><linearGradient id="s104"><stop offset="0" stop-color="#00ffe3"/><stop offset="0.25" stop-color="#03ffdb"/><stop offset="0.309" stop-color="#23ffd8"/><stop offset="0.368" stop-color="#60ffd5"/><stop offset="0.412" stop-color="#a4ffd2"/><stop offset="0.456" stop-color="#fffccd"/><stop offset="0.485" stop-color="#ffc09a"/><stop offset="0.529" stop-color="#ff8367"/><stop offset="0.588" stop-color="#ff513d"/><stop offset="0.676" stop-color="#ff271b"/><stop offset="0.824" stop-color="#ff0904"/><stop offset="1" stop-color="#ff0000"/></linearGradient><linearGradient id="s105"><stop offset="0" stop-color="#00ffeb"/><stop offset="0.25" stop-color="#04ffe6"/><stop offset="0.309" stop-color="#27ffe4"/><stop offset="0.368" stop-color="#69ffe1"/><stop offset="0.412" stop-color="#b2ffdf"/><stop offset="0.441" stop-color="#f3ffde"/><stop offset="0.456" stop-color="#ffe8c9"/><stop offset="0.485" stop-color="#ffb097"/><stop offset="0.529" stop-color="#ff7865"/><stop offset="0.603" stop-color="#ff4135"/><stop offset="0.706" stop-color="#ff1b14"/><stop offset="0.882" stop-color="#ff0301"/><stop offset="1" stop-color="#ff0000"/></linearGradient><linearGradient id="s106"><stop offset="0" stop-color="#00fff3"/><stop offset="0.232" stop-color="#01fff1"/><stop offset="0.29" stop-color="#1cfff0"/><stop offset="0.333" stop-color="#45ffef"/><stop offset="0.377" stop-color="#81ffee"/><stop offset="0.42" stop-color="#d5ffed"/><stop offset="0.435" stop-color="#f7ffec"/><stop offset="0.464" stop-color="#ffc6b7"/><stop offset="0.507" stop-color="#ff857a"/><stop offset="0.565" stop-color="#ff5149"/><stop offset="0.652" stop-color="#ff2622"/><stop offset="0.783" stop-color="#ff0a08"/><stop offset="1" stop-color="#ff0000"/></linearGradient><linearGradient id="s107"><stop offset="0" stop-color="#00fffc"/><stop offset="0.232" stop-color="#01fffc"/><stop offset="0.29" stop-color="#20fffc"/><stop offset="0.333" stop-color="#4cfffc"/><stop offset="0.377" stop-color="#8cfffc"/><stop offset="0.42" stop-color="#e7fffc"/><stop offset="0.435" stop-color="#fff2ef"/><stop offset="0.464" stop-color="#ffb6b4"/><stop offset="0.507" stop-color="#ff7a79"/><stop offset="0.565" stop-color="#ff4949"/><stop offset="0.652" stop-color="#ff2222"/><stop offset="0.783" stop-color="#ff0808"/><stop offset="1" stop-color="#ff0000"/></linearGradient><linearGradient id="s108"><stop offset="0" stop-color="#00f9ff"/><stop offset="0.232" stop-color="#02f6ff"/><stop offset="0.29" stop-color="#23f5ff"/><stop offset="0.348" stop-color="#63f4ff"/><stop offset="0.391" stop-color="#aef2ff"/><stop offset="0.42" stop-color="#eff2ff"/><stop offset="0.435" stop-color="#ffdeeb"/><stop offset="0.464" stop-color="#ffa7b1"/><stop offset="0.507" stop-color="#ff6f77"/><stop offset="0.565" stop-color="#ff4248"/><stop offset="0.652" stop-color="#ff1e22"/><stop offset="0.783" stop-color="#ff0608"/><stop offset="1" stop-color="#ff0000"/></linearGradient><linearGradient id="s109"><stop offset="0" stop-color="#00f1ff"/><stop offset="0.229" stop-color="#02ebff"/><stop offset="0.286" stop-color="#22e9ff"/><stop offset="0.343" stop-color="#60e6ff"/><stop offset="0.386" stop-color="#a7e4ff"/><stop offset="0.414" stop-color="#e5e2ff"/><stop offset="0.429" stop-color="#ffd9f5"/><stop offset="0.457" stop-color="#ffa3ba"/><stop offset="0.5" stop-color="#ff6c7d"/><stop offset="0.557" stop-color="#ff404d"/><stop offset="0.643" stop-color="#ff1d25"/><stop offset="0.771" stop-color="#ff060a"/><stop offset="0.971" stop-color="#ff0000"/><stop offset="1" stop-color="#ff0000"/></linearGradient><linearGradient id="s110"><stop offset="0" stop-color="#00e8ff"/><stop offset="0.229" stop-color="#03e0ff"/><stop offset="0.286" stop-color="#24ddff"/><stop offset="0.343" stop-color="#63d9ff"/><stop offset="0.386" stop-color="#abd6ff"/><stop offset="0.414" stop-color="#ead4ff"/><stop offset="0.429" stop-color="#ffc6f1"/><stop offset="0.457" stop-color="#ff94b7"/><stop offset="0.5" stop-color="#ff627c"/><stop offset="0.557" stop-color="#ff3a4c"/><stop offset="0.643" stop-color="#ff1924"/><stop offset="0.786" stop-color="#ff0308"/><stop offset="1" stop-color="#ff0000"/></linearGradient><linearGradient id="s111"><stop offset="0" stop-color="#00e0ff"/><stop offset="0.225" stop-color="#03d5ff"/><stop offset="0.282" stop-color="#23d1ff"/><stop offset="0.338" stop-color="#60cdff"/><stop offset="0.38" stop-color="#a5c9ff"/><stop offset="0.423" stop-color="#ffc1fb"/><stop offset="0.451" stop-color="#ff90bf"/><stop offset="0.493" stop-color="#ff5f82"/><stop offset="0.549" stop-color="#ff3850"/><stop offset="0.634" stop-color="#ff1827"/><stop offset="0.775" stop-color="#ff0309"/><stop offset="0.986" stop-color="#ff0000"/><stop offset="1" stop-color="#ff0000"/></linearGradient><linearGradient id="s112"><stop offset="0" stop-color="#00d8ff"/><stop offset="0.225" stop-color="#04cbff"/><stop offset="0.282" stop-color="#25c6ff"/><stop offset="0.338" stop-color="#63c1ff"/><stop offset="0.38" stop-color="#a9bcff"/><stop offset="0.408" stop-color="#e5b8ff"/><stop offset="0.423" stop-color="#ffb0f6"/><stop offset="0.465" stop-color="#ff72a5"/><stop offset="0.521" stop-color="#ff4165"/><stop offset="0.592" stop-color="#ff2038"/><stop offset="0.704" stop-color="#ff0814"/><stop offset="0.901" stop-color="#ff0000"/><stop offset="1" stop-color="#ff0000"/></linearGradient><linearGradient id="s113"><stop offset="0" stop-color="#00d0ff"/><stop offset="0.211" stop-color="#01c2ff"/><stop offset="0.268" stop-color="#1dbdff"/><stop offset="0.324" stop-color="#54b7ff"/><stop offset="0.366" stop-color="#93b2ff"/><stop offset="0.408" stop-color="#eaabff"/><stop offset="0.423" stop-color="#ffa0f2"/><stop offset="0.451" stop-color="#ff77b9"/><stop offset="0.493" stop-color="#ff4e7f"/><stop offset="0.549" stop-color="#ff2c4f"/><stop offset="0.634" stop-color="#ff1127"/><stop offset="0.775" stop-color="#ff0109"/><stop offset="1" stop-color="#ff0000"/></linearGradient><linearGradient id="s114"><stop offset="0" stop-color="#00c9ff"/><stop offset="0.208" stop-color="#01b9ff"/><stop offset="0.264" stop-color="#1cb3ff"/><stop offset="0.319" stop-color="#51acff"/><stop offset="0.361" stop-color="#8ea7ff"/><stop offset="0.403" stop-color="#e1a0ff"/><stop offset="0.417" stop-color="#ff9bfc"/><stop offset="0.444" stop-color="#ff73c1"/><stop offset="0.486" stop-color="#ff4b85"/><stop offset="0.542" stop-color="#ff2a53"/><stop offset="0.625" stop-color="#ff102a"/><stop offset="0.75" stop-color="#ff010d"/><stop offset="0.944" stop-color="#ff0000"/><stop offset="1" stop-color="#ff0000"/></linearGradient><linearGradient id="s115"><stop offset="0" stop-color="#00c1ff"/><stop offset="0.208" stop-color="#02b0ff"/><stop offset="0.264" stop-color="#1ea9ff"/><stop offset="0.319" stop-color="#54a2ff"/><stop offset="0.361" stop-color="#929bff"/><stop offset="0.403" stop-color="#e594ff"/><stop offset="0.417" stop-color="#ff8df7"/><stop offset="0.444" stop-color="#ff68be"/><stop offset="0.486" stop-color="#ff4383"/><stop offset="0.542" stop-color="#ff2553"/><stop offset="0.625" stop-color="#ff0d29"/><stop offset="0.764" stop-color="#ff000b"/><stop offset="0.972" stop-color="#ff0000"/><stop offset="1" stop-color="#ff0000"/></linearGradient><linearGradient id="s116"><stop offset="0" stop-color="#00baff"/><stop offset="0.205" stop-color="#02a7ff"/><stop offset="0.26" stop-color="#1da0ff"/><stop offset="0.315" stop-color="#5298ff"/><stop offset="0.356" stop-color="#8d92ff"/><stop offset="0.397" stop-color="#dd8aff"/><stop offset="0.411" stop-color="#fd87ff"/><stop offset="0.452" stop-color="#ff56af"/><stop offset="0.507" stop-color="#ff2f6d"/><stop offset="0.575" stop-color="#ff153e"/><stop offset="0.685" stop-color="#ff0318"/><stop offset="0.863" stop-color="#ff0002"/><stop offset="1" stop-color="#ff0000"/></linearGradient><linearGradient id="s117"><stop offset="0" stop-color="#00b3ff"/><stop offset="0.205" stop-color="#039fff"/><stop offset="0.26" stop-color="#1f97ff"/><stop offset="0.315" stop-color="#558fff"/><stop offset="0.356" stop-color="#9087ff"/><stop offset="0.411" stop-color="#ff7bfc"/><stop offset="0.438" stop-color="#ff5ac3"/><stop offset="0.479" stop-color="#ff3988"/><stop offset="0.534" stop-color="#ff1e56"/><stop offset="0.616" stop-color="#ff0a2c"/><stop offset="0.753" stop-color="#ff000c"/><stop offset="0.973" stop-color="#ff0000"/><stop offset="1" stop-color="#ff0000"/></linearGradient><linearGradient id="s118"><stop offset="0" stop-color="#00acff"/><stop offset="0.205" stop-color="#0396ff"/><stop offset="0.26" stop-color="#218fff"/><stop offset="0.315" stop-color="#5685ff"/><stop offset="0.37" stop-color="#aa7bff"/><stop offset="0.411" stop-color="#ff70fb"/><stop offset="0.452" stop-color="#ff46ac"/><stop offset="0.507" stop-color="#ff256c"/><stop offset="0.589" stop-color="#ff0c38"/><stop offset="0.712" stop-color="#ff0013"/><stop offset="0.904" stop-color="#ff0001"/><stop offset="1" stop-color="#ff0000"/></linearGradient><linearGradient id="s119"><stop offset="0" stop-color="#00a6ff"/><stop offset="0.205" stop-color="#048eff"/><stop offset="0.26" stop-color="#2286ff"/><stop offset="0.315" stop-color="#587dff"/><stop offset="0.356" stop-color="#9375ff"/><stop offset="0.411" stop-color="#ff67fb"/><stop offset="0.452" stop-color="#ff3fad"/><stop offset="0.507" stop-color="#ff216d"/><stop offset="0.575" stop-color="#ff0d3f"/><stop offset="0.671" stop-color="#ff011d"/><stop offset="0.836" stop-color="#ff0005"/><stop offset="1" stop-color="#ff0000"/></linearGradient><linearGradient id="s120"><stop offset="0" stop-color="#009fff"/><stop offset="0.205" stop-color="#0487ff"/><stop offset="0.274" stop-color="#2c7cff"/><stop offset="0.329" stop-color="#6772ff"/><stop offset="0.384" stop-color="#bf66ff"/><stop offset="0.411" stop-color="#fa60ff"/><stop offset="0.452" stop-color="#ff3cb4"/><stop offset="0.507" stop-color="#ff1f72"/><stop offset="0.589" stop-color="#ff093c"/><stop offset="0.699" stop-color="#ff0019"/><stop offset="0.863" stop-color="#ff0003"/><stop offset="1" stop-color="#ff0000"/></linearGradient><linearGradient id="s121"><stop offset="0" stop-color="#0099ff"/><stop offset="0.192" stop-color="#0182ff"/><stop offset="0.247" stop-color="#1a79ff"/><stop offset="0.301" stop-color="#496fff"/><stop offset="0.356" stop-color="#9264ff"/><stop offset="0.397" stop-color="#e05aff"/><stop offset="0.411" stop-color="#ff57ff"/><stop offset="0.452" stop-color="#ff35b1"/><stop offset="0.507" stop-color="#ff1a71"/><stop offset="0.589" stop-color="#ff073b"/><stop offset="0.726" stop-color="#ff0013"/><stop offset="0.932" stop-color="#ff0000"/><stop offset="1" stop-color="#ff0000"/></linearGradient><linearGradient id="s122"><stop offset="0" stop-color="#0093ff"/><stop offset="0.194" stop-color="#027aff"/><stop offset="0.264" stop-color="#256fff"/><stop offset="0.319" stop-color="#5c64ff"/><stop offset="0.375" stop-color="#ae58ff"/><stop offset="0.417" stop-color="#ff4cfa"/><stop offset="0.458" stop-color="#ff2dae"/><stop offset="0.514" stop-color="#ff166f"/><stop offset="0.597" stop-color="#ff053b"/><stop offset="0.708" stop-color="#ff0018"/><stop offset="0.903" stop-color="#ff0002"/><stop offset="1" stop-color="#ff0000"/></linearGradient><linearGradient id="s123"><stop offset="0" stop-color="#008dff"/><stop offset="0.192" stop-color="#0274ff"/><stop offset="0.247" stop-color="#1b6bff"/><stop offset="0.301" stop-color="#4961ff"/><stop offset="0.356" stop-color="#9055ff"/><stop offset="0.397" stop-color="#da4bff"/><stop offset="0.411" stop-color="#f848ff"/><stop offset="0.438" stop-color="#ff34ce"/><stop offset="0.479" stop-color="#ff1e92"/><stop offset="0.548" stop-color="#ff0a56"/><stop offset="0.644" stop-color="#ff0029"/><stop offset="0.808" stop-color="#ff0009"/><stop offset="1" stop-color="#ff0000"/></linearGradient><linearGradient id="s124"><stop offset="0" stop-color="#0087ff"/><stop offset="0.192" stop-color="#026dff"/><stop offset="0.26" stop-color="#2561ff"/><stop offset="0.315" stop-color="#5957ff"/><stop offset="0.37" stop-color="#a74aff"/><stop offset="0.411" stop-color="#f840ff"/><stop offset="0.438" stop-color="#ff2ece"/><stop offset="0.479" stop-color="#ff1a93"/><stop offset="0.548" stop-color="#ff0857"/><stop offset="0.644" stop-color="#ff002a"/><stop offset="0.795" stop-color="#ff000b"/><stop offset="1" stop-color="#ff0000"/></linearGradient><linearGradient id="s125"><stop offset="0" stop-color="#0081ff"/><stop offset="0.194" stop-color="#0367ff"/><stop offset="0.264" stop-color="#265bff"/><stop offset="0.319" stop-color="#5a50ff"/><stop offset="0.375" stop-color="#a844ff"/><stop offset="0.417" stop-color="#f839ff"/><stop offset="0.444" stop-color="#ff29cf"/><stop offset="0.486" stop-color="#ff1694"/><stop offset="0.556" stop-color="#ff0658"/><stop offset="0.653" stop-color="#ff002b"/><stop offset="0.792" stop-color="#ff000e"/><stop offset="1" stop-color="#ff0000"/></linearGradient><linearGradient id="s126"><stop offset="0" stop-color="#007cff"/><stop offset="0.2" stop-color="#0461ff"/><stop offset="0.271" stop-color="#2954ff"/><stop offset="0.329" stop-color="#5f49ff"/><stop offset="0.386" stop-color="#af3cff"/><stop offset="0.429" stop-color="#ff31fd"/><stop offset="0.471" stop-color="#ff1bb2"/><stop offset="0.529" stop-color="#ff0a74"/><stop offset="0.6" stop-color="#ff0145"/><stop offset="0.714" stop-color="#ff001e"/><stop offset="0.9" stop-color="#ff0005"/><stop offset="1" stop-color="#ff0000"/></linearGradient><linearGradient id="s127"><stop offset="0" stop-color="#0077ff"/><stop offset="0.188" stop-color="#015dff"/><stop offset="0.261" stop-color="#2051ff"/><stop offset="0.319" stop-color="#5046ff"/><stop offset="0.377" stop-color="#9739ff"/><stop offset="0.42" stop-color="#e12fff"/><stop offset="0.435" stop-color="#fe2cff"/><stop offset="0.478" stop-color="#ff18b5"/><stop offset="0.536" stop-color="#ff0876"/><stop offset="0.623" stop-color="#ff0040"/><stop offset="0.754" stop-color="#ff0019"/><stop offset="0.957" stop-color="#ff0003"/><stop offset="1" stop-color="#ff0001"/></linearGradient><linearGradient id="s128"><stop offset="0" stop-color="#0071ff"/><stop offset="0.191" stop-color="#0257ff"/><stop offset="0.265" stop-color="#204bff"/><stop offset="0.324" stop-color="#5040ff"/><stop offset="0.382" stop-color="#9634ff"/><stop offset="0.426" stop-color="#df2aff"/><stop offset="0.441" stop-color="#fb27ff"/><stop offset="0.485" stop-color="#ff14b8"/><stop offset="0.529" stop-color="#ff0986"/><stop offset="0.603" stop-color="#ff0151"/><stop offset="0.706" stop-color="#ff0028"/><stop offset="0.882" stop-color="#ff000a"/><stop offset="1" stop-color="#ff0002"/></linearGradient><linearGradient id="s129"><stop offset="0" stop-color="#006cff"/><stop offset="0.194" stop-color="#0252ff"/><stop offset="0.269" stop-color="#2146ff"/><stop offset="0.328" stop-color="#503bff"/><stop offset="0.388" stop-color="#952fff"/><stop offset="0.433" stop-color="#dc25ff"/><stop offset="0.448" stop-color="#f822ff"/><stop offset="0.478" stop-color="#ff16d0"/><stop offset="0.537" stop-color="#ff0788"/><stop offset="0.612" stop-color="#ff0053"/><stop offset="0.716" stop-color="#ff002a"/><stop offset="0.896" stop-color="#ff000a"/><stop offset="1" stop-color="#ff0003"/></linearGradient><linearGradient id="s130"><stop offset="0" stop-color="#0067ff"/><stop offset="0.197" stop-color="#024dff"/><stop offset="0.273" stop-color="#2140ff"/><stop offset="0.348" stop-color="#5e33ff"/><stop offset="0.409" stop-color="#a927ff"/><stop offset="0.455" stop-color="#f51dff"/><stop offset="0.47" stop-color="#ff18ec"/><stop offset="0.515" stop-color="#ff0bab"/><stop offset="0.576" stop-color="#ff0272"/><stop offset="0.652" stop-color="#ff0046"/><stop offset="0.773" stop-color="#ff0020"/><stop offset="0.97" stop-color="#ff0006"/><stop offset="1" stop-color="#ff0004"/></linearGradient><linearGradient id="s131"><stop offset="0" stop-color="#0062ff"/><stop offset="0.203" stop-color="#0347ff"/><stop offset="0.281" stop-color="#253bff"/><stop offset="0.344" stop-color="#5430ff"/><stop offset="0.406" stop-color="#9b24ff"/><stop offset="0.469" stop-color="#ff17ff"/><stop offset="0.516" stop-color="#ff0ab7"/><stop offset="0.578" stop-color="#ff0179"/><stop offset="0.672" stop-color="#ff0043"/><stop offset="0.797" stop-color="#ff001f"/><stop offset="1" stop-color="#ff0006"/></linearGradient><linearGradient id="s132"><stop offset="0" stop-color="#005eff"/><stop offset="0.206" stop-color="#0443ff"/><stop offset="0.286" stop-color="#2536ff"/><stop offset="0.349" stop-color="#542bff"/><stop offset="0.413" stop-color="#9a1fff"/><stop offset="0.476" stop-color="#fc13ff"/><stop offset="0.524" stop-color="#ff08b9"/><stop offset="0.587" stop-color="#ff007b"/><stop offset="0.683" stop-color="#ff0045"/><stop offset="0.81" stop-color="#ff0020"/><stop offset="1" stop-color="#ff0007"/></linearGradient><linearGradient id="s133"><stop offset="0" stop-color="#0059ff"/><stop offset="0.21" stop-color="#043eff"/><stop offset="0.29" stop-color="#2631ff"/><stop offset="0.371" stop-color="#6324ff"/><stop offset="0.435" stop-color="#ae18ff"/><stop offset="0.484" stop-color="#f910ff"/><stop offset="0.532" stop-color="#ff06bc"/><stop offset="0.597" stop-color="#ff007e"/><stop offset="0.677" stop-color="#ff004e"/><stop offset="0.823" stop-color="#ff0021"/><stop offset="1" stop-color="#ff0009"/></linearGradient><linearGradient id="s134"><stop offset="0" stop-color="#0055ff"/><stop offset="0.197" stop-color="#013cff"/><stop offset="0.279" stop-color="#1d30ff"/><stop offset="0.361" stop-color="#5422ff"/><stop offset="0.426" stop-color="#9817ff"/><stop offset="0.492" stop-color="#f60cff"/><stop offset="0.508" stop-color="#ff09ec"/><stop offset="0.557" stop-color="#ff02ac"/><stop offset="0.623" stop-color="#ff0074"/><stop offset="0.721" stop-color="#ff0042"/><stop offset="0.885" stop-color="#ff0019"/><stop offset="1" stop-color="#ff000b"/></linearGradient><linearGradient id="s135"><stop offset="0" stop-color="#0050ff"/><stop offset="0.2" stop-color="#0237ff"/><stop offset="0.283" stop-color="#1e2bff"/><stop offset="0.367" stop-color="#541fff"/><stop offset="0.433" stop-color="#9714ff"/><stop offset="0.5" stop-color="#f30aff"/><stop offset="0.517" stop-color="#ff07f0"/><stop offset="0.567" stop-color="#ff01af"/><stop offset="0.633" stop-color="#ff0077"/><stop offset="0.733" stop-color="#ff0044"/><stop offset="0.883" stop-color="#ff001d"/><stop offset="1" stop-color="#ff000e"/></linearGradient><linearGradient id="s136"><stop offset="0" stop-color="#004cff"/><stop offset="0.207" stop-color="#0333ff"/><stop offset="0.293" stop-color="#2127ff"/><stop offset="0.362" stop-color="#4c1dff"/><stop offset="0.431" stop-color="#8b12ff"/><stop offset="0.5" stop-color="#e308ff"/><stop offset="0.517" stop-color="#fe06ff"/><stop offset="0.569" stop-color="#ff00ba"/><stop offset="0.638" stop-color="#ff007e"/><stop offset="0.741" stop-color="#ff0048"/><stop offset="0.879" stop-color="#ff0022"/><stop offset="1" stop-color="#ff0010"/></linearGradient><linearGradient id="s137"><stop offset="0" stop-color="#0048ff"/><stop offset="0.211" stop-color="#032fff"/><stop offset="0.298" stop-color="#2123ff"/><stop offset="0.386" stop-color="#5917ff"/><stop offset="0.456" stop-color="#9d0dff"/><stop offset="0.526" stop-color="#fb04ff"/><stop offset="0.596" stop-color="#ff00ab"/><stop offset="0.684" stop-color="#ff006a"/><stop offset="0.807" stop-color="#ff0038"/><stop offset="0.982" stop-color="#ff0015"/><stop offset="1" stop-color="#ff0013"/></linearGradient><linearGradient id="s138"><stop offset="0" stop-color="#0044ff"/><stop offset="0.214" stop-color="#042bff"/><stop offset="0.304" stop-color="#221fff"/><stop offset="0.393" stop-color="#5913ff"/><stop offset="0.464" stop-color="#9c0aff"/><stop offset="0.536" stop-color="#f802ff"/><stop offset="0.571" stop-color="#ff00d4"/><stop offset="0.643" stop-color="#ff008f"/><stop offset="0.75" stop-color="#ff0053"/><stop offset="0.893" stop-color="#ff0028"/><stop offset="1" stop-color="#ff0017"/></linearGradient><linearGradient id="s139"><stop offset="0" stop-color="#0040ff"/><stop offset="0.218" stop-color="#0427ff"/><stop offset="0.309" stop-color="#221cff"/><stop offset="0.4" stop-color="#5910ff"/><stop offset="0.473" stop-color="#9b07ff"/><stop offset="0.545" stop-color="#f501ff"/><stop offset="0.564" stop-color="#ff00ef"/><stop offset="0.618" stop-color="#ff00b1"/><stop offset="0.691" stop-color="#ff0079"/><stop offset="0.818" stop-color="#ff0041"/><stop offset="1" stop-color="#ff001a"/></linearGradient><linearGradient id="s140"><stop offset="0" stop-color="#003cff"/><stop offset="0.208" stop-color="#0226ff"/><stop offset="0.302" stop-color="#1d1aff"/><stop offset="0.396" stop-color="#510fff"/><stop offset="0.472" stop-color="#9006ff"/><stop offset="0.547" stop-color="#e700ff"/><stop offset="0.566" stop-color="#ff00fd"/><stop offset="0.623" stop-color="#ff00ba"/><stop offset="0.717" stop-color="#ff0074"/><stop offset="0.83" stop-color="#ff0044"/><stop offset="1" stop-color="#ff001e"/></linearGradient><linearGradient id="s141"><stop offset="0" stop-color="#0039ff"/><stop offset="0.212" stop-color="#0222ff"/><stop offset="0.327" stop-color="#2615ff"/><stop offset="0.423" stop-color="#5f0aff"/><stop offset="0.5" stop-color="#a203ff"/><stop offset="0.577" stop-color="#fe00ff"/><stop offset="0.635" stop-color="#ff00bd"/><stop offset="0.712" stop-color="#ff0082"/><stop offset="0.827" stop-color="#ff004c"/><stop offset="1" stop-color="#ff0022"/></linearGradient><linearGradient id="s142"><stop offset="0" stop-color="#0035ff"/><stop offset="0.216" stop-color="#031fff"/><stop offset="0.314" stop-color="#1e14ff"/><stop offset="0.412" stop-color="#510aff"/><stop offset="0.51" stop-color="#a001ff"/><stop offset="0.588" stop-color="#fa00ff"/><stop offset="0.667" stop-color="#ff00af"/><stop offset="0.745" stop-color="#ff0079"/><stop offset="0.863" stop-color="#ff0048"/><stop offset="1" stop-color="#ff0027"/></linearGradient><linearGradient id="s143"><stop offset="0" stop-color="#0032ff"/><stop offset="0.22" stop-color="#031cff"/><stop offset="0.34" stop-color="#2710ff"/><stop offset="0.44" stop-color="#5e06ff"/><stop offset="0.54" stop-color="#b300ff"/><stop offset="0.6" stop-color="#f700ff"/><stop offset="0.64" stop-color="#ff00d7"/><stop offset="0.72" stop-color="#ff0094"/><stop offset="0.82" stop-color="#ff005f"/><stop offset="0.98" stop-color="#ff0030"/><stop offset="1" stop-color="#ff002c"/></linearGradient><linearGradient id="s144"><stop offset="0" stop-color="#002eff"/><stop offset="0.229" stop-color="#0419ff"/><stop offset="0.354" stop-color="#2a0cff"/><stop offset="0.458" stop-color="#6503ff"/><stop offset="0.542" stop-color="#a800ff"/><stop offset="0.625" stop-color="#ff00fa"/><stop offset="0.688" stop-color="#ff00ba"/><stop offset="0.771" stop-color="#ff0081"/><stop offset="0.896" stop-color="#ff004c"/><stop offset="1" stop-color="#ff0032"/></linearGradient><linearGradient id="s145"><stop offset="0" stop-color="#002bff"/><stop offset="0.213" stop-color="#0218ff"/><stop offset="0.34" stop-color="#220cff"/><stop offset="0.468" stop-color="#6402ff"/><stop offset="0.553" stop-color="#a700ff"/><stop offset="0.638" stop-color="#ff00fd"/><stop offset="0.702" stop-color="#ff00bd"/><stop offset="0.787" stop-color="#ff0083"/><stop offset="0.915" stop-color="#ff004e"/><stop offset="1" stop-color="#ff0038"/></linearGradient><linearGradient id="s146"><stop offset="0" stop-color="#0028ff"/><stop offset="0.217" stop-color="#0215ff"/><stop offset="0.348" stop-color="#230aff"/><stop offset="0.457" stop-color="#5702ff"/><stop offset="0.543" stop-color="#9300ff"/><stop offset="0.63" stop-color="#e500ff"/><stop offset="0.652" stop-color="#fd00ff"/><stop offset="0.739" stop-color="#ff00af"/><stop offset="0.826" stop-color="#ff007b"/><stop offset="0.957" stop-color="#ff004a"/><stop offset="1" stop-color="#ff003f"/></linearGradient><linearGradient id="s147"><stop offset="0" stop-color="#0025ff"/><stop offset="0.222" stop-color="#0313ff"/><stop offset="0.356" stop-color="#2308ff"/><stop offset="0.467" stop-color="#5701ff"/><stop offset="0.556" stop-color="#9200ff"/><stop offset="0.644" stop-color="#e200ff"/><stop offset="0.667" stop-color="#fa00ff"/><stop offset="0.778" stop-color="#ff00a3"/><stop offset="0.889" stop-color="#ff006a"/><stop offset="1" stop-color="#ff0046"/></linearGradient><linearGradient id="s148"><stop offset="0" stop-color="#0022ff"/><stop offset="0.233" stop-color="#0410ff"/><stop offset="0.349" stop-color="#1f07ff"/><stop offset="0.465" stop-color="#5001ff"/><stop offset="0.581" stop-color="#9b00ff"/><stop offset="0.674" stop-color="#ee00ff"/><stop offset="0.698" stop-color="#ff00f7"/><stop offset="0.767" stop-color="#ff00ba"/><stop offset="0.86" stop-color="#ff0082"/><stop offset="1" stop-color="#ff004e"/></linearGradient><linearGradient id="s149"><stop offset="0" stop-color="#001fff"/><stop offset="0.238" stop-color="#040dff"/><stop offset="0.381" stop-color="#2704ff"/><stop offset="0.5" stop-color="#5c00ff"/><stop offset="0.619" stop-color="#ac00ff"/><stop offset="0.714" stop-color="#ff00fa"/><stop offset="0.786" stop-color="#ff00bd"/><stop offset="0.881" stop-color="#ff0085"/><stop offset="1" stop-color="#ff0058"/></linearGradient><linearGradient id="s150"><stop offset="0" stop-color="#001dff"/><stop offset="0.244" stop-color="#050bff"/><stop offset="0.39" stop-color="#2803ff"/><stop offset="0.537" stop-color="#6900ff"/><stop offset="0.659" stop-color="#bd00ff"/><stop offset="0.732" stop-color="#ff00fe"/><stop offset="0.829" stop-color="#ff00b0"/><stop offset="0.951" stop-color="#ff0073"/><stop offset="1" stop-color="#ff0062"/></linearGradient><linearGradient id="s151"><stop offset="0" stop-color="#001aff"/><stop offset="0.25" stop-color="#0509ff"/><stop offset="0.4" stop-color="#2801ff"/><stop offset="0.55" stop-color="#6900ff"/><stop offset="0.65" stop-color="#a800ff"/><stop offset="0.75" stop-color="#fc00ff"/><stop offset="0.85" stop-color="#ff00b3"/><stop offset="0.975" stop-color="#ff0076"/><stop offset="1" stop-color="#ff006d"/></linearGradient><linearGradient id="s152"><stop offset="0" stop-color="#0018ff"/><stop offset="0.237" stop-color="#0309ff"/><stop offset="0.395" stop-color="#2401ff"/><stop offset="0.553" stop-color="#6200ff"/><stop offset="0.684" stop-color="#b200ff"/><stop offset="0.763" stop-color="#f200ff"/><stop offset="0.789" stop-color="#ff00f4"/><stop offset="0.895" stop-color="#ff00aa"/><stop offset="1" stop-color="#ff0079"/></linearGradient><linearGradient id="s153"><stop offset="0" stop-color="#0015ff"/><stop offset="0.243" stop-color="#0407ff"/><stop offset="0.405" stop-color="#2400ff"/><stop offset="0.568" stop-color="#6200ff"/><stop offset="0.703" stop-color="#b000ff"/><stop offset="0.784" stop-color="#ef00ff"/><stop offset="0.811" stop-color="#ff00f8"/><stop offset="0.892" stop-color="#ff00bd"/><stop offset="1" stop-color="#ff0086"/></linearGradient><linearGradient id="s154"><stop offset="0" stop-color="#0013ff"/><stop offset="0.25" stop-color="#0405ff"/><stop offset="0.417" stop-color="#2500ff"/><stop offset="0.583" stop-color="#6100ff"/><stop offset="0.722" stop-color="#ae00ff"/><stop offset="0.833" stop-color="#ff00fc"/><stop offset="0.917" stop-color="#ff00c1"/><stop offset="1" stop-color="#ff0095"/></linearGradient><linearGradient id="s155"><stop offset="0" stop-color="#0011ff"/><stop offset="0.257" stop-color="#0504ff"/><stop offset="0.429" stop-color="#2500ff"/><stop offset="0.6" stop-color="#6100ff"/><stop offset="0.743" stop-color="#ac00ff"/><stop offset="0.857" stop-color="#fd00ff"/><stop offset="0.971" stop-color="#ff00b5"/><stop offset="1" stop-color="#ff00a6"/></linearGradient><linearGradient id="s156"><stop offset="0" stop-color="#000fff"/><stop offset="0.273" stop-color="#0602ff"/><stop offset="0.455" stop-color="#2900ff"/><stop offset="0.636" stop-color="#6800ff"/><stop offset="0.788" stop-color="#b700ff"/><stop offset="0.879" stop-color="#f600ff"/><stop offset="0.909" stop-color="#ff00f1"/><stop offset="1" stop-color="#ff00b9"/></linearGradient><linearGradient id="s157"><stop offset="0" stop-color="#000dff"/><stop offset="0.281" stop-color="#0601ff"/><stop offset="0.469" stop-color="#2900ff"/><stop offset="0.656" stop-color="#6700ff"/><stop offset="0.812" stop-color="#b500ff"/><stop offset="0.906" stop-color="#f100ff"/><stop offset="0.938" stop-color="#ff00f6"/><stop offset="1" stop-color="#ff00ce"/></linearGradient><linearGradient id="s158"><stop offset="0" stop-color="#000bff"/><stop offset="0.258" stop-color="#0401ff"/><stop offset="0.452" stop-color="#2200ff"/><stop offset="0.645" stop-color="#5a00ff"/><stop offset="0.806" stop-color="#a100ff"/><stop offset="0.968" stop-color="#ff00fb"/><stop offset="1" stop-color="#ff00e6"/></linearGradient><linearGradient id="s159"><stop offset="0" stop-color="#0009ff"/><stop offset="0.276" stop-color="#0500ff"/><stop offset="0.483" stop-color="#2600ff"/><stop offset="0.69" stop-color="#6200ff"/><stop offset="0.862" stop-color="#ac00ff"/><stop offset="1" stop-color="#fe00ff"/></linearGradient><linearGradient id="s160"><stop offset="0" stop-color="#0007ff"/><stop offset="0.286" stop-color="#0600ff"/><stop offset="0.5" stop-color="#2600ff"/><stop offset="0.714" stop-color="#6100ff"/><stop offset="0.893" stop-color="#aa00ff"/><stop offset="1" stop-color="#e300ff"/></linearGradient><linearGradient id="s161"><stop offset="0" stop-color="#0006ff"/><stop offset="0.296" stop-color="#0600ff"/><stop offset="0.519" stop-color="#2700ff"/><stop offset="0.741" stop-color="#6000ff"/><stop offset="0.926" stop-color="#a700ff"/><stop offset="1" stop-color="#ca00ff"/></linearGradient><linearGradient id="s162"><stop offset="0" stop-color="#0004ff"/><stop offset="0.269" stop-color="#0300ff"/><stop offset="0.538" stop-color="#2700ff"/><stop offset="0.769" stop-color="#5f00ff"/><stop offset="0.962" stop-color="#a400ff"/><stop offset="1" stop-color="#b400ff"/></linearGradient><linearGradient id="s163"><stop offset="0" stop-color="#0003ff"/><stop offset="0.292" stop-color="#0500ff"/><stop offset="0.542" stop-color="#2400ff"/><stop offset="0.792" stop-color="#5b00ff"/><stop offset="1" stop-color="#a000ff"/></linearGradient><linearGradient id="s164"><stop offset="0" stop-color="#0002ff"/><stop offset="0.304" stop-color="#0500ff"/><stop offset="0.609" stop-color="#2b00ff"/><stop offset="0.87" stop-color="#6600ff"/><stop offset="1" stop-color="#8e00ff"/></linearGradient><linearGradient id="s165"><stop offset="0" stop-color="#0001ff"/><stop offset="0.318" stop-color="#0600ff"/><stop offset="0.636" stop-color="#2b00ff"/><stop offset="0.909" stop-color="#6400ff"/><stop offset="1" stop-color="#7d00ff"/></linearGradient><linearGradient id="s166"><stop offset="0" stop-color="#0000ff"/><stop offset="0.3" stop-color="#0400ff"/><stop offset="0.6" stop-color="#2200ff"/><stop offset="0.95" stop-color="#6100ff"/><stop offset="1" stop-color="#6d00ff"/></linearGradient><linearGradient id="s167"><stop offset="0" stop-color="#0000ff"/><stop offset="0.316" stop-color="#0500ff"/><stop offset="0.684" stop-color="#2900ff"/><stop offset="1" stop-color="#5f00ff"/></linearGradient><linearGradient id="s168"><stop offset="0" stop-color="#0000ff"/><stop offset="0.353" stop-color="#0700ff"/><stop offset="0.706" stop-color="#2600ff"/><stop offset="1" stop-color="#5300ff"/></linearGradient><linearGradient id="s169"><stop offset="0" stop-color="#0000ff"/><stop offset="0.375" stop-color="#0700ff"/><stop offset="0.812" stop-color="#2e00ff"/><stop offset="1" stop-color="#4700ff"/></linearGradient><linearGradient id="s170"><stop offset="0" stop-color="#0000ff"/><stop offset="0.4" stop-color="#0800ff"/><stop offset="0.867" stop-color="#2d00ff"/><stop offset="1" stop-color="#3d00ff"/></linearGradient><linearGradient id="s171"><stop offset="0" stop-color="#0000ff"/><stop offset="0.462" stop-color="#0a00ff"/><stop offset="1" stop-color="#3300ff"/></linearGradient><linearGradient id="s172"><stop offset="0" stop-color="#0000ff"/><stop offset="0.5" stop-color="#0b00ff"/><stop offset="1" stop-color="#2b00ff"/></linearGradient><linearGradient id="s173"><stop offset="0" stop-color="#0000ff"/><stop offset="0.6" stop-color="#0e00ff"/><stop offset="1" stop-color="#2300ff"/></linearGradient><linearGradient id="s174"><stop offset="0" stop-color="#0000ff"/><stop offset="0.778" stop-color="#1200ff"/><stop offset="1" stop-color="#1c00ff"/></linearGradient><linearGradient id="s175"><stop offset="0" stop-color="#0000ff"/><stop offset="1" stop-color="#1600ff"/></linearGradient><linearGradient id="s176"><stop offset="0" stop-color="#0100ff"/><stop offset="1" stop-color="#1100ff"/></linearGradient><clipPath id="ci"><rect x="1601" y="154" width="233" height="196.5"/></clipPath><linearGradient id="i0"><stop offset="0" stop-color="#b8ff00"/><stop offset="0.125" stop-color="#c2ff00"/><stop offset="0.25" stop-color="#ccff00"/><stop offset="0.375" stop-color="#d7ff00"/><stop offset="0.5" stop-color="#e3ff00"/><stop offset="0.625" stop-color="#efff00"/><stop offset="0.75" stop-color="#fbff00"/><stop offset="0.875" stop-color="#fff700"/><stop offset="1" stop-color="#ffeb00"/></linearGradient><linearGradient id="i1"><stop offset="0" stop-color="#b9ff00"/><stop offset="0.125" stop-color="#c3ff00"/><stop offset="0.25" stop-color="#ceff00"/><stop offset="0.375" stop-color="#d9ff00"/><stop offset="0.5" stop-color="#e4ff00"/><stop offset="0.625" stop-color="#f0ff00"/><stop offset="0.75" stop-color="#fdff00"/><stop offset="0.875" stop-color="#fff500"/><stop offset="1" stop-color="#ffe900"/></linearGradient><linearGradient id="i2"><stop offset="0" stop-color="#baff00"/><stop offset="0.125" stop-color="#c5ff00"/><stop offset="0.25" stop-color="#cfff00"/><stop offset="0.375" stop-color="#dbff00"/><stop offset="0.5" stop-color="#e6ff00"/><stop offset="0.625" stop-color="#f2ff00"/><stop offset="0.75" stop-color="#feff00"/><stop offset="0.875" stop-color="#fff300"/><stop offset="1" stop-color="#ffe800"/></linearGradient><linearGradient id="i3"><stop offset="0" stop-color="#bcff00"/><stop offset="0.125" stop-color="#c6ff00"/><stop offset="0.25" stop-color="#d1ff00"/><stop offset="0.375" stop-color="#dcff00"/><stop offset="0.5" stop-color="#e8ff00"/><stop offset="0.625" stop-color="#f4ff00"/><stop offset="0.75" stop-color="#fffe00"/><stop offset="0.875" stop-color="#fff100"/><stop offset="1" stop-color="#ffe600"/></linearGradient><linearGradient id="i4"><stop offset="0" stop-color="#bdff00"/><stop offset="0.125" stop-color="#c7ff00"/><stop offset="0.25" stop-color="#d2ff00"/><stop offset="0.375" stop-color="#deff00"/><stop offset="0.5" stop-color="#e9ff00"/><stop offset="0.625" stop-color="#f6ff00"/><stop offset="0.75" stop-color="#fffc00"/><stop offset="0.875" stop-color="#fff000"/><stop offset="1" stop-color="#ffe400"/></linearGradient><linearGradient id="i5"><stop offset="0" stop-color="#beff00"/><stop offset="0.125" stop-color="#c9ff00"/><stop offset="0.25" stop-color="#d4ff00"/><stop offset="0.375" stop-color="#dfff00"/><stop offset="0.5" stop-color="#ebff00"/><stop offset="0.625" stop-color="#f7ff00"/><stop offset="0.75" stop-color="#fffa00"/><stop offset="0.875" stop-color="#ffee00"/><stop offset="1" stop-color="#ffe300"/></linearGradient><linearGradient id="i6"><stop offset="0" stop-color="#c0ff00"/><stop offset="0.125" stop-color="#caff00"/><stop offset="0.25" stop-color="#d5ff00"/><stop offset="0.375" stop-color="#e1ff00"/><stop offset="0.5" stop-color="#edff00"/><stop offset="0.625" stop-color="#f9ff00"/><stop offset="0.75" stop-color="#fff800"/><stop offset="0.875" stop-color="#ffec00"/><stop offset="1" stop-color="#ffe100"/></linearGradient><linearGradient id="i7"><stop offset="0" stop-color="#c1ff00"/><stop offset="0.125" stop-color="#ccff00"/><stop offset="0.25" stop-color="#d7ff00"/><stop offset="0.375" stop-color="#e3ff00"/><stop offset="0.5" stop-color="#efff00"/><stop offset="0.625" stop-color="#fbff00"/><stop offset="0.75" stop-color="#fff600"/><stop offset="0.875" stop-color="#ffea00"/><stop offset="1" stop-color="#ffdf00"/></linearGradient><linearGradient id="i8"><stop offset="0" stop-color="#c2ff01"/><stop offset="0.125" stop-color="#cdff00"/><stop offset="0.25" stop-color="#d9ff00"/><stop offset="0.375" stop-color="#e4ff00"/><stop offset="0.5" stop-color="#f0ff00"/><stop offset="0.625" stop-color="#fdff00"/><stop offset="0.75" stop-color="#fff400"/><stop offset="0.875" stop-color="#ffe900"/><stop offset="1" stop-color="#ffdd00"/></linearGradient><linearGradient id="i9"><stop offset="0" stop-color="#c4ff01"/><stop offset="0.125" stop-color="#cfff00"/><stop offset="0.25" stop-color="#daff00"/><stop offset="0.375" stop-color="#e6ff00"/><stop offset="0.5" stop-color="#f2ff00"/><stop offset="0.625" stop-color="#ffff00"/><stop offset="0.75" stop-color="#fff300"/><stop offset="0.875" stop-color="#ffe700"/><stop offset="1" stop-color="#ffdc00"/></linearGradient><linearGradient id="i10"><stop offset="0" stop-color="#c5ff01"/><stop offset="0.125" stop-color="#d0ff00"/><stop offset="0.25" stop-color="#dcff00"/><stop offset="0.375" stop-color="#e8ff00"/><stop offset="0.5" stop-color="#f4ff00"/><stop offset="0.625" stop-color="#fffd00"/><stop offset="0.75" stop-color="#fff100"/><stop offset="0.875" stop-color="#ffe500"/><stop offset="1" stop-color="#ffda00"/></linearGradient><linearGradient id="i11"><stop offset="0" stop-color="#c7ff01"/><stop offset="0.125" stop-color="#d2ff01"/><stop offset="0.25" stop-color="#ddff00"/><stop offset="0.375" stop-color="#e9ff00"/><stop offset="0.5" stop-color="#f6ff00"/><stop offset="0.625" stop-color="#fffb00"/><stop offset="0.75" stop-color="#ffef00"/><stop offset="0.875" stop-color="#ffe300"/><stop offset="1" stop-color="#ffd800"/></linearGradient><linearGradient id="i12"><stop offset="0" stop-color="#c8ff01"/><stop offset="0.125" stop-color="#d3ff01"/><stop offset="0.25" stop-color="#dfff00"/><stop offset="0.375" stop-color="#ebff00"/><stop offset="0.5" stop-color="#f8ff00"/><stop offset="0.625" stop-color="#fff900"/><stop offset="0.75" stop-color="#ffed00"/><stop offset="0.875" stop-color="#ffe200"/><stop offset="1" stop-color="#ffd700"/></linearGradient><linearGradient id="i13"><stop offset="0" stop-color="#caff01"/><stop offset="0.125" stop-color="#d5ff01"/><stop offset="0.25" stop-color="#e1ff00"/><stop offset="0.375" stop-color="#edff00"/><stop offset="0.5" stop-color="#faff00"/><stop offset="0.625" stop-color="#fff800"/><stop offset="0.75" stop-color="#ffeb00"/><stop offset="0.875" stop-color="#ffe000"/><stop offset="1" stop-color="#ffd500"/></linearGradient><linearGradient id="i14"><stop offset="0" stop-color="#cbff02"/><stop offset="0.125" stop-color="#d7ff01"/><stop offset="0.25" stop-color="#e2ff00"/><stop offset="0.375" stop-color="#efff00"/><stop offset="0.5" stop-color="#fbff00"/><stop offset="0.625" stop-color="#fff600"/><stop offset="0.75" stop-color="#ffea00"/><stop offset="0.875" stop-color="#ffde00"/><stop offset="1" stop-color="#ffd300"/></linearGradient><linearGradient id="i15"><stop offset="0" stop-color="#cdff02"/><stop offset="0.125" stop-color="#d8ff01"/><stop offset="0.25" stop-color="#e4ff01"/><stop offset="0.375" stop-color="#f1ff00"/><stop offset="0.5" stop-color="#fdff00"/><stop offset="0.625" stop-color="#fff400"/><stop offset="0.75" stop-color="#ffe800"/><stop offset="0.875" stop-color="#ffdc00"/><stop offset="1" stop-color="#ffd200"/></linearGradient><linearGradient id="i16"><stop offset="0" stop-color="#ceff02"/><stop offset="0.125" stop-color="#daff01"/><stop offset="0.25" stop-color="#e6ff01"/><stop offset="0.375" stop-color="#f2ff00"/><stop offset="0.5" stop-color="#ffff00"/><stop offset="0.625" stop-color="#fff200"/><stop offset="0.75" stop-color="#ffe600"/><stop offset="0.875" stop-color="#ffdb00"/><stop offset="1" stop-color="#ffd000"/></linearGradient><linearGradient id="i17"><stop offset="0" stop-color="#d0ff02"/><stop offset="0.125" stop-color="#dbff02"/><stop offset="0.25" stop-color="#e8ff01"/><stop offset="0.375" stop-color="#f4ff00"/><stop offset="0.5" stop-color="#fffd00"/><stop offset="0.625" stop-color="#fff000"/><stop offset="0.75" stop-color="#ffe400"/><stop offset="0.875" stop-color="#ffd900"/><stop offset="1" stop-color="#ffcf00"/></linearGradient><linearGradient id="i18"><stop offset="0" stop-color="#d1ff02"/><stop offset="0.125" stop-color="#ddff02"/><stop offset="0.25" stop-color="#e9ff01"/><stop offset="0.375" stop-color="#f6ff01"/><stop offset="0.5" stop-color="#fffb00"/><stop offset="0.625" stop-color="#ffee00"/><stop offset="0.75" stop-color="#ffe200"/><stop offset="0.875" stop-color="#ffd700"/><stop offset="1" stop-color="#ffcd00"/></linearGradient><linearGradient id="i19"><stop offset="0" stop-color="#d3ff03"/><stop offset="0.125" stop-color="#dfff02"/><stop offset="0.25" stop-color="#ebff01"/><stop offset="0.375" stop-color="#f8ff01"/><stop offset="0.5" stop-color="#fff900"/><stop offset="0.625" stop-color="#ffec00"/><stop offset="0.75" stop-color="#ffe100"/><stop offset="0.875" stop-color="#ffd600"/><stop offset="1" stop-color="#ffcb00"/></linearGradient><linearGradient id="i20"><stop offset="0" stop-color="#d5ff03"/><stop offset="0.125" stop-color="#e1ff02"/><stop offset="0.25" stop-color="#edff01"/><stop offset="0.375" stop-color="#faff01"/><stop offset="0.5" stop-color="#fff700"/><stop offset="0.625" stop-color="#ffeb00"/><stop offset="0.75" stop-color="#ffdf00"/><stop offset="0.875" stop-color="#ffd400"/><stop offset="1" stop-color="#ffca00"/></linearGradient><linearGradient id="i21"><stop offset="0" stop-color="#d6ff03"/><stop offset="0.125" stop-color="#e2ff02"/><stop offset="0.25" stop-color="#efff02"/><stop offset="0.375" stop-color="#fcff01"/><stop offset="0.5" stop-color="#fff500"/><stop offset="0.625" stop-color="#ffe900"/><stop offset="0.75" stop-color="#ffdd00"/><stop offset="0.875" stop-color="#ffd200"/><stop offset="1" stop-color="#ffc800"/></linearGradient><linearGradient id="i22"><stop offset="0" stop-color="#d8ff03"/><stop offset="0.125" stop-color="#e4ff03"/><stop offset="0.25" stop-color="#f1ff02"/><stop offset="0.375" stop-color="#feff01"/><stop offset="0.5" stop-color="#fff301"/><stop offset="0.625" stop-color="#ffe700"/><stop offset="0.75" stop-color="#ffdb00"/><stop offset="0.875" stop-color="#ffd100"/><stop offset="1" stop-color="#ffc600"/></linearGradient><linearGradient id="i23"><stop offset="0" stop-color="#d9ff04"/><stop offset="0.125" stop-color="#e6ff03"/><stop offset="0.25" stop-color="#f3ff02"/><stop offset="0.375" stop-color="#fffe01"/><stop offset="0.5" stop-color="#fff101"/><stop offset="0.625" stop-color="#ffe500"/><stop offset="0.75" stop-color="#ffda00"/><stop offset="0.875" stop-color="#ffcf00"/><stop offset="1" stop-color="#ffc500"/></linearGradient><linearGradient id="i24"><stop offset="0" stop-color="#dbff04"/><stop offset="0.125" stop-color="#e8ff03"/><stop offset="0.25" stop-color="#f4ff02"/><stop offset="0.375" stop-color="#fffc02"/><stop offset="0.5" stop-color="#ffef01"/><stop offset="0.625" stop-color="#ffe300"/><stop offset="0.75" stop-color="#ffd800"/><stop offset="0.875" stop-color="#ffcd00"/><stop offset="1" stop-color="#ffc300"/></linearGradient><linearGradient id="i25"><stop offset="0" stop-color="#ddff04"/><stop offset="0.125" stop-color="#e9ff03"/><stop offset="0.25" stop-color="#f6ff03"/><stop offset="0.375" stop-color="#fffa02"/><stop offset="0.5" stop-color="#ffed01"/><stop offset="0.625" stop-color="#ffe100"/><stop offset="0.75" stop-color="#ffd600"/><stop offset="0.875" stop-color="#ffcc00"/><stop offset="1" stop-color="#ffc200"/></linearGradient><linearGradient id="i26"><stop offset="0" stop-color="#dfff05"/><stop offset="0.125" stop-color="#ebff04"/><stop offset="0.25" stop-color="#f8ff03"/><stop offset="0.375" stop-color="#fff802"/><stop offset="0.5" stop-color="#ffec01"/><stop offset="0.625" stop-color="#ffe001"/><stop offset="0.75" stop-color="#ffd400"/><stop offset="0.875" stop-color="#ffca00"/><stop offset="1" stop-color="#ffc000"/></linearGradient><linearGradient id="i27"><stop offset="0" stop-color="#e0ff05"/><stop offset="0.125" stop-color="#edff04"/><stop offset="0.25" stop-color="#faff03"/><stop offset="0.375" stop-color="#fff602"/><stop offset="0.5" stop-color="#ffea01"/><stop offset="0.625" stop-color="#ffde01"/><stop offset="0.75" stop-color="#ffd300"/><stop offset="0.875" stop-color="#ffc800"/><stop offset="1" stop-color="#ffbf00"/></linearGradient><linearGradient id="i28"><stop offset="0" stop-color="#e2ff05"/><stop offset="0.125" stop-color="#efff04"/><stop offset="0.25" stop-color="#fcff03"/><stop offset="0.375" stop-color="#fff402"/><stop offset="0.5" stop-color="#ffe802"/><stop offset="0.625" stop-color="#ffdc01"/><stop offset="0.75" stop-color="#ffd100"/><stop offset="0.875" stop-color="#ffc700"/><stop offset="1" stop-color="#ffbd00"/></linearGradient><linearGradient id="i29"><stop offset="0" stop-color="#e4ff06"/><stop offset="0.125" stop-color="#f1ff05"/><stop offset="0.25" stop-color="#feff04"/><stop offset="0.375" stop-color="#fff203"/><stop offset="0.5" stop-color="#ffe602"/><stop offset="0.625" stop-color="#ffda01"/><stop offset="0.75" stop-color="#ffcf01"/><stop offset="0.875" stop-color="#ffc500"/><stop offset="1" stop-color="#ffbb00"/></linearGradient><linearGradient id="i30"><stop offset="0" stop-color="#e6ff06"/><stop offset="0.125" stop-color="#f3ff05"/><stop offset="0.25" stop-color="#fffe04"/><stop offset="0.375" stop-color="#fff103"/><stop offset="0.5" stop-color="#ffe402"/><stop offset="0.625" stop-color="#ffd901"/><stop offset="0.75" stop-color="#ffce01"/><stop offset="0.875" stop-color="#ffc300"/><stop offset="1" stop-color="#ffba00"/></linearGradient><linearGradient id="i31"><stop offset="0" stop-color="#e7ff06"/><stop offset="0.125" stop-color="#f5ff05"/><stop offset="0.25" stop-color="#fffc04"/><stop offset="0.375" stop-color="#ffef03"/><stop offset="0.5" stop-color="#ffe202"/><stop offset="0.625" stop-color="#ffd701"/><stop offset="0.75" stop-color="#ffcc01"/><stop offset="0.875" stop-color="#ffc200"/><stop offset="1" stop-color="#ffb800"/></linearGradient><linearGradient id="i32"><stop offset="0" stop-color="#e9ff07"/><stop offset="0.125" stop-color="#f7ff06"/><stop offset="0.25" stop-color="#fffa05"/><stop offset="0.375" stop-color="#ffed03"/><stop offset="0.5" stop-color="#ffe002"/><stop offset="0.625" stop-color="#ffd502"/><stop offset="0.75" stop-color="#ffca01"/><stop offset="0.875" stop-color="#ffc000"/><stop offset="1" stop-color="#ffb700"/></linearGradient><linearGradient id="g16" x1="0" y1="0" x2="0" y2="1"><stop offset="0" stop-color="#18a018"/><stop offset="0.6" stop-color="#109010"/><stop offset="1" stop-color="#086008"/></linearGradient><linearGradient id="g17" x1="0" y1="0" x2="0" y2="1"><stop offset="0" stop-color="#2828f0"/><stop offset="0.25" stop-color="#0000ff"/><stop offset="0.6" stop-color="#0000f0"/><stop offset="1" stop-color="#000090"/></linearGradient><linearGradient id="g18" x1="0" y1="0" x2="0" y2="1"><stop offset="0" stop-color="#383838"/><stop offset="0.49" stop-color="#2a2a2a"/><stop offset="0.5" stop-color="#161616"/><stop offset="1" stop-color="#050505"/></linearGradient><linearGradient id="g19" x1="0" y1="0" x2="1" y2="0"><stop offset="0" stop-color="#262626"/><stop offset="1" stop-color="#383838"/></linearGradient><linearGradient id="g20" x1="0" y1="0" x2="0" y2="1"><stop offset="0" stop-color="#4a4a4a"/><stop offset="0.25" stop-color="#424242"/><stop offset="1" stop-color="#2a2a2a"/></linearGradient><linearGradient id="hf233"><stop offset="0" stop-color="#262626" stop-opacity="0.45"/><stop offset="0.25" stop-color="#262626" stop-opacity="0"/><stop offset="0.8" stop-color="#262626" stop-opacity="0"/><stop offset="1" stop-color="#262626" stop-opacity="0.3"/></linearGradient><linearGradient id="g21" x1="0" y1="0" x2="0" y2="1"><stop offset="0" stop-color="#b0b0b0"/><stop offset="0.08" stop-color="#a4a4a4"/><stop offset="1" stop-color="#4e4e4e"/></linearGradient><linearGradient id="g22" x1="0" y1="0" x2="0" y2="1"><stop offset="0" stop-color="#707070"/><stop offset="0.5" stop-color="#888888"/><stop offset="1" stop-color="#b0b0b0"/></linearGradient><linearGradient id="g23" x1="0" y1="0" x2="0" y2="1"><stop offset="0" stop-color="#141414"/><stop offset="0.5" stop-color="#1e1e1e"/><stop offset="1" stop-color="#383838"/></linearGradient><linearGradient id="g24" x1="0" y1="0" x2="0" y2="1"><stop offset="0" stop-color="#a8a8a8"/><stop offset="1" stop-color="#6a6a6a"/></linearGradient><linearGradient id="g25" x1="0" y1="0" x2="0" y2="1"><stop offset="0" stop-color="#9a9a9a"/><stop offset="1" stop-color="#585858"/></linearGradient><linearGradient id="g26" x1="0" y1="0" x2="0" y2="1"><stop offset="0" stop-color="#acacac"/><stop offset="1" stop-color="#6e6e6e"/></linearGradient><linearGradient id="g27" x1="0" y1="0" x2="0" y2="1"><stop offset="0" stop-color="#727272"/><stop offset="0.5" stop-color="#8a8a8a"/><stop offset="1" stop-color="#b2b2b2"/></linearGradient><radialGradient id="g28" cx="0.5" cy="0.3" r="0.7"><stop offset="0" stop-color="#3e3e3e"/><stop offset="1" stop-color="#2e2e2e"/></radialGradient><linearGradient id="g29" x1="0" y1="0" x2="0" y2="1"><stop offset="0" stop-color="#b4b4b4"/><stop offset="0.1" stop-color="#a6a6a6"/><stop offset="1" stop-color="#5c5c5c"/></linearGradient></defs>
<rect x="0" y="0" width="1920" height="1039" fill="#333333"/><rect x="0" y="0" width="1920" height="25.4" fill="#ffffff"/><rect x="7.3" y="4.1" width="6.6" height="6.6" rx="1.2" fill="#f8d020" transform="rotate(45 10.6 7.4)"/><rect x="2.2" y="9.2" width="6.6" height="6.6" rx="1.2" fill="#40b4ec" transform="rotate(45 5.5 12.5)"/><rect x="12.4" y="9.2" width="6.6" height="6.6" rx="1.2" fill="#28c830" transform="rotate(45 15.7 12.5)"/><rect x="7.3" y="14.3" width="6.6" height="6.6" rx="1.2" fill="#e82860" transform="rotate(45 10.6 17.6)"/><text x="23.5" y="17.5" font-size="12" fill="#000" textLength="444" lengthAdjust="spacingAndGlyphs">Calman 2021 Calman Ultimate for Business 320 Days Remaining  - Untitled</text><path d="M1790 12.400h11" stroke="#2a2a2a" stroke-width="0.9" fill="none"/><path d="M1842.200 9.600h8.600v8h-8.600z M1844.400 9.600v-2.200h8.600v8h-2.200" stroke="#2a2a2a" stroke-width="0.9" fill="none"/><path d="M1895.300 7l11.200 11M1906.500 7l-11.200 11" stroke="#2a2a2a" stroke-width="0.95" fill="none"/><rect x="0" y="25.4" width="1920" height="73.6" fill="#232323"/><rect x="0" y="25.4" width="1920" height="1.2" fill="#151515"/><rect x="214" y="40" width="1720" height="5.5" fill="url(#g1)" rx="2"/><path d="M0 26H206.5V54a4.5 4.5 0 0 1-4.5 4.5H4.500a4.500 4.500 0 0 1-4.500-4.500z" fill="url(#g2)" stroke="#8a1010" stroke-width="0.8"/><rect x="0" y="26" width="206.5" height="1.5" fill="#ff6a5a" opacity="0.55"/><g transform="translate(38.8 41.8) rotate(45)"><path d="M-8 -0.6V-8H-0.6M-8 0.6V8H-0.6M8 -0.6V-8H0.6M8 0.6V8H0.6" fill="none" stroke="#fff" stroke-width="3" stroke-linejoin="round"/><rect x="-5.5" y="-5.5" width="4.600" height="4.600" rx="0.700" fill="#fff3f3"/><rect x="-5.5" y="0.9" width="4.600" height="4.600" rx="0.700" fill="#fff3f3"/><rect x="0.9" y="-5.5" width="4.600" height="4.600" rx="0.700" fill="#fff3f3"/><rect x="0.9" y="0.9" width="4.600" height="4.600" rx="0.700" fill="#fff3f3"/></g><text x="56" y="50.2" font-size="30" fill="#ffffff" textLength="97.5" lengthAdjust="spacingAndGlyphs" stroke="#fff" stroke-width="0.7">calman</text><circle cx="187.500" cy="42.500" r="10.500" fill="url(#g3)"/><path d="M182 40h11l-5.5 6.500z" fill="#fff"/><path d="M-2 65.600H26a4.500 4.500 0 0 1 4.500 4.500V92a4.500 4.500 0 0 1-4.500 4.500H-2z" fill="url(#g4)" stroke="#bababa" stroke-width="1.3"/><circle cx="14" cy="80.500" r="10.500" fill="url(#g5)"/><path d="M11 74.500l6.500 6-6.500 6z" fill="#fff"/><path d="M33 99.200V70.600a5 5 0 0 1 5-5H132a5 5 0 0 1 5 5V99.200z" fill="url(#g6)"/><path d="M33 99.200V70.600a5 5 0 0 1 5-5H132a5 5 0 0 1 5 5V99.200" fill="none" stroke="#606060" stroke-width="1.1"/><line x1="99.5" y1="66" x2="99.5" y2="99" stroke="#5e5e5e" stroke-width="1.2"/><text x="40.3" y="87.5" font-size="13.5" fill="#ececec" textLength="52" lengthAdjust="spacingAndGlyphs">History 1</text><circle cx="116.300" cy="84.700" r="10.600" fill="url(#g7)"/><path d="M112.800 85.300h7M116.300 81.800v7" stroke="#a4a4a4" stroke-width="1.100" fill="none"/><path d="M1284 99V70a5 5 0 0 1 5-5H1440.5a5 5 0 0 1 5 5V99z" fill="url(#g8)"/><path d="M1284 99V70a5 5 0 0 1 5-5H1291V99z" fill="#22cc22"/><text x="1294" y="78.3" font-size="12" fill="#f4f4f4" textLength="74" lengthAdjust="spacingAndGlyphs" stroke="#f4f4f4" stroke-width="0.3">X-Rite i1Pro 2</text><text x="1294" y="95" font-size="12" fill="#f4f4f4" textLength="63" lengthAdjust="spacingAndGlyphs" stroke="#f4f4f4" stroke-width="0.3">Direct View</text><circle cx="1382.5" cy="82.3" r="10.5" fill="url(#g9)"/><path d="M1376.9 80.7h11.200l-5.600 5.900z" fill="#fff"/><line x1="1405.5" y1="68" x2="1405.5" y2="99" stroke="#3e3e3e" stroke-width="1.3"/><circle cx="1428" cy="82.300" r="14.300" fill="#0808e8" stroke="#e8e8ff" stroke-width="1.2"/><text x="1428" y="86.3" font-size="11" fill="#fff" text-anchor="middle" textLength="17.5" lengthAdjust="spacingAndGlyphs" stroke="#fff" stroke-width="0.3">236</text><path d="M1452 99V70a5 5 0 0 1 5-5H1682a5 5 0 0 1 5 5V99z" fill="url(#g8)"/><path d="M1452 99V70a5 5 0 0 1 5-5H1459V99z" fill="#22cc22"/><text x="1462" y="78.3" font-size="12" fill="#f4f4f4" textLength="192" lengthAdjust="spacingAndGlyphs" stroke="#f4f4f4" stroke-width="0.3">CalMAN Client 3 Pattern Generator</text><circle cx="1669" cy="82.3" r="10.5" fill="url(#g10)"/><path d="M1663.4 80.7h11.200l-5.600 5.900z" fill="#fff"/><path d="M1694 99V70a5 5 0 0 1 5-5H1851a5 5 0 0 1 5 5V99z" fill="url(#g8)"/><path d="M1694 99V70a5 5 0 0 1 5-5H1701V99z" fill="#e6e600"/><text x="1704.3" y="78.3" font-size="12" fill="#f4f4f4" textLength="118.5" lengthAdjust="spacingAndGlyphs" stroke="#f4f4f4" stroke-width="0.3">Direct Display Control</text><circle cx="1837.5" cy="82.3" r="10.5" fill="url(#g11)"/><path d="M1831.9 80.7h11.200l-5.600 5.900z" fill="#fff"/><rect x="1860" y="65.600" width="36.500" height="30.800" rx="4.500" fill="url(#g12)" stroke="#c4c4c4" stroke-width="1.400"/><circle cx="1878.600" cy="80.800" r="10.600" fill="url(#g13)"/><path d="M1883.20 80.80L1885.90 80.80M1881.85 84.05L1883.76 85.96M1878.60 85.40L1878.60 88.10M1875.35 84.05L1873.44 85.96M1874.00 80.80L1871.30 80.80M1875.35 77.55L1873.44 75.64M1878.60 76.20L1878.60 73.50M1881.85 77.55L1883.76 75.64" stroke="#e2e2e2" stroke-width="2.200" fill="none"/><circle cx="1878.6" cy="80.8" r="4.300" fill="none" stroke="#e2e2e2" stroke-width="2.100"/><rect x="1898.800" y="65.600" width="30" height="30.800" rx="4.500" fill="url(#g12)" stroke="#c4c4c4" stroke-width="1.400"/><circle cx="1915" cy="80.800" r="10.600" fill="url(#g13)"/><path d="M1916.500 75l-6 5.600 6 5.600z" fill="#fff"/><text x="101.5" y="161.8" font-size="40.5" fill="#f2f2f2" textLength="346.5" lengthAdjust="spacingAndGlyphs">Saturation Sweeps</text><text x="92" y="770" font-size="30" fill="#f4f4f4" textLength="232.5" lengthAdjust="spacingAndGlyphs">Current Reading</text><text x="91.5" y="815.2" font-size="24" fill="#f4f4f4" textLength="109.5" lengthAdjust="spacingAndGlyphs">x: 0,4269</text><text x="91.5" y="858.8" font-size="24" fill="#f4f4f4" textLength="109.5" lengthAdjust="spacingAndGlyphs">y: 0,5153</text><text x="91.5" y="902" font-size="24" fill="#f4f4f4" textLength="103" lengthAdjust="spacingAndGlyphs">fL: 69,63</text><text x="91.5" y="945.3" font-size="24" fill="#f4f4f4" textLength="169.5" lengthAdjust="spacingAndGlyphs">cd/m²: 238,58</text><rect x="121.5" y="220.5" width="332.5" height="439" fill="#262626"/><line x1="165.8" y1="220.5" x2="165.8" y2="659.5" stroke="#a6a6a6" stroke-width="1.6"/><line x1="210.1" y1="220.5" x2="210.1" y2="659.5" stroke="#a6a6a6" stroke-width="1.6"/><line x1="254.4" y1="220.5" x2="254.4" y2="659.5" stroke="#a6a6a6" stroke-width="1.6"/><line x1="298.7" y1="220.5" x2="298.7" y2="659.5" stroke="#a6a6a6" stroke-width="1.6"/><line x1="343" y1="220.5" x2="343" y2="659.5" stroke="#a6a6a6" stroke-width="1.6"/><line x1="387.3" y1="220.5" x2="387.3" y2="659.5" stroke="#a6a6a6" stroke-width="1.6"/><line x1="431.6" y1="220.5" x2="431.6" y2="659.5" stroke="#a6a6a6" stroke-width="1.6"/><line x1="121" y1="220.5" x2="454" y2="220.5" stroke="#a6a6a6" stroke-width="1.8"/><line x1="454" y1="219.7" x2="454" y2="659.5" stroke="#a6a6a6" stroke-width="1.6"/><line x1="121.5" y1="219.7" x2="121.5" y2="667" stroke="#a6a6a6" stroke-width="1.8"/><line x1="115.5" y1="659.5" x2="454.8" y2="659.5" stroke="#a6a6a6" stroke-width="1.8"/><line x1="116" y1="220.4" x2="121.5" y2="220.4" stroke="#d0d0d0" stroke-width="1.6"/><line x1="116" y1="284.7" x2="121.5" y2="284.7" stroke="#d0d0d0" stroke-width="1.6"/><line x1="116" y1="346" x2="121.5" y2="346" stroke="#d0d0d0" stroke-width="1.6"/><line x1="116" y1="408.8" x2="121.5" y2="408.8" stroke="#d0d0d0" stroke-width="1.6"/><line x1="116" y1="472.5" x2="121.5" y2="472.5" stroke="#d0d0d0" stroke-width="1.6"/><line x1="116" y1="534.2" x2="121.5" y2="534.2" stroke="#d0d0d0" stroke-width="1.6"/><line x1="116" y1="598.3" x2="121.5" y2="598.3" stroke="#d0d0d0" stroke-width="1.6"/><line x1="116" y1="659.5" x2="121.5" y2="659.5" stroke="#d0d0d0" stroke-width="1.6"/><line x1="165.8" y1="659.5" x2="165.8" y2="667" stroke="#a6a6a6" stroke-width="1.8"/><line x1="210.1" y1="659.5" x2="210.1" y2="667" stroke="#a6a6a6" stroke-width="1.8"/><line x1="254.4" y1="659.5" x2="254.4" y2="667" stroke="#a6a6a6" stroke-width="1.8"/><line x1="298.7" y1="659.5" x2="298.7" y2="667" stroke="#a6a6a6" stroke-width="1.8"/><line x1="343" y1="659.5" x2="343" y2="667" stroke="#a6a6a6" stroke-width="1.8"/><line x1="387.3" y1="659.5" x2="387.3" y2="667" stroke="#a6a6a6" stroke-width="1.8"/><line x1="431.6" y1="659.5" x2="431.6" y2="667" stroke="#a6a6a6" stroke-width="1.8"/><text x="121.5" y="683.5" font-size="15" fill="#dcdcdc" text-anchor="middle">0</text><text x="165.8" y="683.5" font-size="15" fill="#dcdcdc" text-anchor="middle">2</text><text x="210.10000000000002" y="683.5" font-size="15" fill="#dcdcdc" text-anchor="middle">4</text><text x="254.4" y="683.5" font-size="15" fill="#dcdcdc" text-anchor="middle">6</text><text x="298.70000000000005" y="683.5" font-size="15" fill="#dcdcdc" text-anchor="middle">8</text><text x="343.0" y="683.5" font-size="15" fill="#dcdcdc" text-anchor="middle">10</text><text x="387.3" y="683.5" font-size="15" fill="#dcdcdc" text-anchor="middle">12</text><text x="431.6" y="683.5" font-size="15" fill="#dcdcdc" text-anchor="middle">14</text><text x="121" y="258.25714285714287" font-size="15" fill="#dcdcdc" text-anchor="end">100%</text><text x="121" y="320.97142857142853" font-size="15" fill="#dcdcdc" text-anchor="end">80%</text><text x="121" y="383.68571428571425" font-size="15" fill="#dcdcdc" text-anchor="end">60%</text><text x="121" y="446.4" font-size="15" fill="#dcdcdc" text-anchor="end">40%</text><text x="121" y="509.1142857142857" font-size="15" fill="#dcdcdc" text-anchor="end">20%</text><text x="121" y="571.8285714285714" font-size="15" fill="#dcdcdc" text-anchor="end">100</text><text x="121" y="634.5428571428571" font-size="15" fill="#dcdcdc" text-anchor="end">0</text><text x="268.5" y="215" font-size="15" fill="#dcdcdc" text-anchor="middle" textLength="85" lengthAdjust="spacingAndGlyphs">DeltaE 2000</text><rect x="121.8" y="226.1" width="79.9755" height="6.5" fill="#000" opacity="0.88"/><rect x="122.3" y="226.8" width="78.2755" height="4.6" fill="#cc1414"/><rect x="122.3" y="226.8" width="78.2755" height="1.84" fill="#fff" opacity="0.2"/><rect x="122.3" y="229.56" width="78.2755" height="1.84" fill="#000" opacity="0.3"/><rect x="121.8" y="233.35" width="41.213" height="6.5" fill="#000" opacity="0.88"/><rect x="122.3" y="234.05" width="39.513" height="4.6" fill="#14cc14"/><rect x="122.3" y="234.05" width="39.513" height="1.84" fill="#fff" opacity="0.2"/><rect x="122.3" y="236.81" width="39.513" height="1.84" fill="#000" opacity="0.3"/><rect x="121.8" y="240.6" width="50.073" height="6.5" fill="#000" opacity="0.88"/><rect x="122.3" y="241.3" width="48.373" height="4.6" fill="#1414d2"/><rect x="122.3" y="241.3" width="48.373" height="1.84" fill="#fff" opacity="0.2"/><rect x="122.3" y="244.06" width="48.373" height="1.84" fill="#000" opacity="0.3"/><rect x="121.8" y="247.85" width="27.48" height="6.5" fill="#000" opacity="0.88"/><rect x="122.3" y="248.55" width="25.78" height="4.6" fill="#14cccc"/><rect x="122.3" y="248.55" width="25.78" height="1.84" fill="#fff" opacity="0.2"/><rect x="122.3" y="251.31" width="25.78" height="1.84" fill="#000" opacity="0.3"/><rect x="121.8" y="255.1" width="3.115" height="6.5" fill="#000" opacity="0.88"/><rect x="122.3" y="255.8" width="1.415" height="4.6" fill="#cc14cc"/><rect x="122.3" y="255.8" width="1.415" height="1.84" fill="#fff" opacity="0.2"/><rect x="122.3" y="258.56" width="1.415" height="1.84" fill="#000" opacity="0.3"/><rect x="121.8" y="262.35" width="9.9815" height="6.5" fill="#000" opacity="0.88"/><rect x="122.3" y="263.05" width="8.2815" height="4.6" fill="#cccc14"/><rect x="122.3" y="263.05" width="8.2815" height="1.84" fill="#fff" opacity="0.2"/><rect x="122.3" y="265.81" width="8.2815" height="1.84" fill="#000" opacity="0.3"/><rect x="121.8" y="288.814" width="27.48" height="6.5" fill="#000" opacity="0.88"/><rect x="122.3" y="289.514" width="25.78" height="4.6" fill="#cd3232"/><rect x="122.3" y="289.514" width="25.78" height="1.84" fill="#fff" opacity="0.2"/><rect x="122.3" y="292.274" width="25.78" height="1.84" fill="#000" opacity="0.3"/><rect x="121.8" y="296.064" width="33.0175" height="6.5" fill="#000" opacity="0.88"/><rect x="122.3" y="296.764" width="31.3175" height="4.6" fill="#32cd32"/><rect x="122.3" y="296.764" width="31.3175" height="1.84" fill="#fff" opacity="0.2"/><rect x="122.3" y="299.524" width="31.3175" height="1.84" fill="#000" opacity="0.3"/><rect x="121.8" y="303.314" width="42.985" height="6.5" fill="#000" opacity="0.88"/><rect x="122.3" y="304.014" width="41.285" height="4.6" fill="#3232cd"/><rect x="122.3" y="304.014" width="41.285" height="1.84" fill="#fff" opacity="0.2"/><rect x="122.3" y="306.774" width="41.285" height="1.84" fill="#000" opacity="0.3"/><rect x="121.8" y="310.564" width="27.48" height="6.5" fill="#000" opacity="0.88"/><rect x="122.3" y="311.264" width="25.78" height="4.6" fill="#32cdcd"/><rect x="122.3" y="311.264" width="25.78" height="1.84" fill="#fff" opacity="0.2"/><rect x="122.3" y="314.024" width="25.78" height="1.84" fill="#000" opacity="0.3"/><rect x="121.8" y="317.814" width="4.887" height="6.5" fill="#000" opacity="0.88"/><rect x="122.3" y="318.514" width="3.187" height="4.6" fill="#cd32cd"/><rect x="122.3" y="318.514" width="3.187" height="1.84" fill="#fff" opacity="0.2"/><rect x="122.3" y="321.274" width="3.187" height="1.84" fill="#000" opacity="0.3"/><rect x="121.8" y="325.064" width="8.2095" height="6.5" fill="#000" opacity="0.88"/><rect x="122.3" y="325.764" width="6.5095" height="4.6" fill="#cdcd32"/><rect x="122.3" y="325.764" width="6.5095" height="1.84" fill="#fff" opacity="0.2"/><rect x="122.3" y="328.524" width="6.5095" height="1.84" fill="#000" opacity="0.3"/><rect x="121.8" y="351.529" width="15.519" height="6.5" fill="#000" opacity="0.88"/><rect x="122.3" y="352.229" width="13.819" height="4.6" fill="#cd5c5c"/><rect x="122.3" y="352.229" width="13.819" height="1.84" fill="#fff" opacity="0.2"/><rect x="122.3" y="354.989" width="13.819" height="1.84" fill="#000" opacity="0.3"/><rect x="121.8" y="358.779" width="27.48" height="6.5" fill="#000" opacity="0.88"/><rect x="122.3" y="359.479" width="25.78" height="4.6" fill="#5ccd5c"/><rect x="122.3" y="359.479" width="25.78" height="1.84" fill="#fff" opacity="0.2"/><rect x="122.3" y="362.239" width="25.78" height="1.84" fill="#000" opacity="0.3"/><rect x="121.8" y="366.029" width="42.985" height="6.5" fill="#000" opacity="0.88"/><rect x="122.3" y="366.729" width="41.285" height="4.6" fill="#5c5ccd"/><rect x="122.3" y="366.729" width="41.285" height="1.84" fill="#fff" opacity="0.2"/><rect x="122.3" y="369.489" width="41.285" height="1.84" fill="#000" opacity="0.3"/><rect x="121.8" y="373.279" width="30.581" height="6.5" fill="#000" opacity="0.88"/><rect x="122.3" y="373.979" width="28.881" height="4.6" fill="#5ccdcd"/><rect x="122.3" y="373.979" width="28.881" height="1.84" fill="#fff" opacity="0.2"/><rect x="122.3" y="376.739" width="28.881" height="1.84" fill="#000" opacity="0.3"/><rect x="121.8" y="380.529" width="9.9815" height="6.5" fill="#000" opacity="0.88"/><rect x="122.3" y="381.229" width="8.2815" height="4.6" fill="#cd5ccd"/><rect x="122.3" y="381.229" width="8.2815" height="1.84" fill="#fff" opacity="0.2"/><rect x="122.3" y="383.989" width="8.2815" height="1.84" fill="#000" opacity="0.3"/><rect x="121.8" y="387.779" width="6.8805" height="6.5" fill="#000" opacity="0.88"/><rect x="122.3" y="388.479" width="5.1805" height="4.6" fill="#cdcd5c"/><rect x="122.3" y="388.479" width="5.1805" height="1.84" fill="#fff" opacity="0.2"/><rect x="122.3" y="391.239" width="5.1805" height="1.84" fill="#000" opacity="0.3"/><rect x="121.8" y="414.243" width="11.3105" height="6.5" fill="#000" opacity="0.88"/><rect x="122.3" y="414.943" width="9.6105" height="4.6" fill="#cd8585"/><rect x="122.3" y="414.943" width="9.6105" height="1.84" fill="#fff" opacity="0.2"/><rect x="122.3" y="417.703" width="9.6105" height="1.84" fill="#000" opacity="0.3"/><rect x="121.8" y="421.493" width="24.379" height="6.5" fill="#000" opacity="0.88"/><rect x="122.3" y="422.193" width="22.679" height="4.6" fill="#85cd85"/><rect x="122.3" y="422.193" width="22.679" height="1.84" fill="#fff" opacity="0.2"/><rect x="122.3" y="424.953" width="22.679" height="1.84" fill="#000" opacity="0.3"/><rect x="121.8" y="428.743" width="38.7765" height="6.5" fill="#000" opacity="0.88"/><rect x="122.3" y="429.443" width="37.0765" height="4.6" fill="#8585cd"/><rect x="122.3" y="429.443" width="37.0765" height="1.84" fill="#fff" opacity="0.2"/><rect x="122.3" y="432.203" width="37.0765" height="1.84" fill="#000" opacity="0.3"/><rect x="121.8" y="435.993" width="30.581" height="6.5" fill="#000" opacity="0.88"/><rect x="122.3" y="436.693" width="28.881" height="4.6" fill="#85cdcd"/><rect x="122.3" y="436.693" width="28.881" height="1.84" fill="#fff" opacity="0.2"/><rect x="122.3" y="439.453" width="28.881" height="1.84" fill="#000" opacity="0.3"/><rect x="121.8" y="443.243" width="14.4115" height="6.5" fill="#000" opacity="0.88"/><rect x="122.3" y="443.943" width="12.7115" height="4.6" fill="#cd85cd"/><rect x="122.3" y="443.943" width="12.7115" height="1.84" fill="#fff" opacity="0.2"/><rect x="122.3" y="446.703" width="12.7115" height="1.84" fill="#000" opacity="0.3"/><rect x="121.8" y="450.493" width="13.0825" height="6.5" fill="#000" opacity="0.88"/><rect x="122.3" y="451.193" width="11.3825" height="4.6" fill="#cdcd85"/><rect x="122.3" y="451.193" width="11.3825" height="1.84" fill="#fff" opacity="0.2"/><rect x="122.3" y="453.953" width="11.3825" height="1.84" fill="#000" opacity="0.3"/><rect x="121.8" y="476.957" width="8.2095" height="6.5" fill="#000" opacity="0.88"/><rect x="122.3" y="477.657" width="6.5095" height="4.6" fill="#cdaeae"/><rect x="122.3" y="477.657" width="6.5095" height="1.84" fill="#fff" opacity="0.2"/><rect x="122.3" y="480.417" width="6.5095" height="1.84" fill="#000" opacity="0.3"/><rect x="121.8" y="484.207" width="25.708" height="6.5" fill="#000" opacity="0.88"/><rect x="122.3" y="484.907" width="24.008" height="4.6" fill="#aecdae"/><rect x="122.3" y="484.907" width="24.008" height="1.84" fill="#fff" opacity="0.2"/><rect x="122.3" y="487.667" width="24.008" height="1.84" fill="#000" opacity="0.3"/><rect x="121.8" y="491.457" width="38.7765" height="6.5" fill="#000" opacity="0.88"/><rect x="122.3" y="492.157" width="37.0765" height="4.6" fill="#aeaecd"/><rect x="122.3" y="492.157" width="37.0765" height="1.84" fill="#fff" opacity="0.2"/><rect x="122.3" y="494.917" width="37.0765" height="1.84" fill="#000" opacity="0.3"/><rect x="121.8" y="498.707" width="35.6755" height="6.5" fill="#000" opacity="0.88"/><rect x="122.3" y="499.407" width="33.9755" height="4.6" fill="#aecdcd"/><rect x="122.3" y="499.407" width="33.9755" height="1.84" fill="#fff" opacity="0.2"/><rect x="122.3" y="502.167" width="33.9755" height="1.84" fill="#000" opacity="0.3"/><rect x="121.8" y="505.957" width="21.278" height="6.5" fill="#000" opacity="0.88"/><rect x="122.3" y="506.657" width="19.578" height="4.6" fill="#cdaecd"/><rect x="122.3" y="506.657" width="19.578" height="1.84" fill="#fff" opacity="0.2"/><rect x="122.3" y="509.417" width="19.578" height="1.84" fill="#000" opacity="0.3"/><rect x="121.8" y="513.207" width="22.607" height="6.5" fill="#000" opacity="0.88"/><rect x="122.3" y="513.907" width="20.907" height="4.6" fill="#cdcdae"/><rect x="122.3" y="513.907" width="20.907" height="1.84" fill="#fff" opacity="0.2"/><rect x="122.3" y="516.667" width="20.907" height="1.84" fill="#000" opacity="0.3"/><rect x="121.5" y="584" width="47.8" height="6" fill="#000"/><rect x="122.3" y="584.8" width="46" height="4.2" fill="url(#g14)"/><rect x="121.5" y="647.3" width="15.8" height="6.8" fill="#000"/><rect x="122.5" y="648.3" width="13.5" height="4.6" fill="#1c1c1c"/><rect x="122.5" y="648.3" width="3" height="4.6" fill="#555"/><rect x="510.8" y="149.5" width="153" height="336.5" fill="#262626"/><line x1="510.8" y1="205.583" x2="663.8" y2="205.583" stroke="#a6a6a6" stroke-width="1.5"/><line x1="510.8" y1="261.667" x2="663.8" y2="261.667" stroke="#a6a6a6" stroke-width="1.5"/><line x1="510.8" y1="317.75" x2="663.8" y2="317.75" stroke="#a6a6a6" stroke-width="1.5"/><line x1="510.8" y1="373.833" x2="663.8" y2="373.833" stroke="#a6a6a6" stroke-width="1.5"/><line x1="510.8" y1="429.917" x2="663.8" y2="429.917" stroke="#a6a6a6" stroke-width="1.5"/><line x1="510.1" y1="148.8" x2="664.5" y2="148.8" stroke="#a6a6a6" stroke-width="3"/><line x1="510.8" y1="149.5" x2="510.8" y2="492" stroke="#a6a6a6" stroke-width="1.6"/><line x1="663.8" y1="149.5" x2="663.8" y2="492" stroke="#a6a6a6" stroke-width="1.6"/><line x1="510.8" y1="486" x2="663.8" y2="486" stroke="#a6a6a6" stroke-width="1.6"/><line x1="503.8" y1="149.5" x2="510.8" y2="149.5" stroke="#d0d0d0" stroke-width="1.5"/><text x="503.5" y="154.9" font-size="15" fill="#dcdcdc" text-anchor="end">15</text><line x1="503.8" y1="205.583" x2="510.8" y2="205.583" stroke="#d0d0d0" stroke-width="1.5"/><text x="503.5" y="210.98333333333335" font-size="15" fill="#dcdcdc" text-anchor="end">10</text><line x1="503.8" y1="261.667" x2="510.8" y2="261.667" stroke="#d0d0d0" stroke-width="1.5"/><text x="503.5" y="267.06666666666666" font-size="15" fill="#dcdcdc" text-anchor="end">5</text><line x1="503.8" y1="317.75" x2="510.8" y2="317.75" stroke="#d0d0d0" stroke-width="1.5"/><text x="503.5" y="323.15" font-size="15" fill="#dcdcdc" text-anchor="end">0</text><line x1="503.8" y1="373.833" x2="510.8" y2="373.833" stroke="#d0d0d0" stroke-width="1.5"/><text x="503.5" y="379.23333333333335" font-size="15" fill="#dcdcdc" text-anchor="end">-5</text><line x1="503.8" y1="429.917" x2="510.8" y2="429.917" stroke="#d0d0d0" stroke-width="1.5"/><text x="503.5" y="435.31666666666666" font-size="15" fill="#dcdcdc" text-anchor="end">-10</text><line x1="503.8" y1="486" x2="510.8" y2="486" stroke="#d0d0d0" stroke-width="1.5"/><text x="503.5" y="491.4" font-size="15" fill="#dcdcdc" text-anchor="end">-15</text><text x="573" y="142.6" font-size="15" fill="#dcdcdc" text-anchor="middle" textLength="44" lengthAdjust="spacingAndGlyphs">DeltaL</text><text x="587.3" y="501.5" font-size="15" fill="#dcdcdc" text-anchor="middle">100%</text><rect x="526.3" y="317.75" width="122" height="3" fill="#050505"/><rect x="527.4" y="318.45" width="119.8" height="1.3" fill="#a4a458"/><rect x="720.8" y="149.5" width="153.2" height="336.5" fill="#262626"/><line x1="720.8" y1="205.583" x2="874" y2="205.583" stroke="#a6a6a6" stroke-width="1.5"/><line x1="720.8" y1="261.667" x2="874" y2="261.667" stroke="#a6a6a6" stroke-width="1.5"/><line x1="720.8" y1="317.75" x2="874" y2="317.75" stroke="#a6a6a6" stroke-width="1.5"/><line x1="720.8" y1="373.833" x2="874" y2="373.833" stroke="#a6a6a6" stroke-width="1.5"/><line x1="720.8" y1="429.917" x2="874" y2="429.917" stroke="#a6a6a6" stroke-width="1.5"/><line x1="720.1" y1="148.8" x2="874.7" y2="148.8" stroke="#a6a6a6" stroke-width="3"/><line x1="720.8" y1="149.5" x2="720.8" y2="492" stroke="#a6a6a6" stroke-width="1.6"/><line x1="874" y1="149.5" x2="874" y2="492" stroke="#a6a6a6" stroke-width="1.6"/><line x1="720.8" y1="486" x2="874" y2="486" stroke="#a6a6a6" stroke-width="1.6"/><line x1="713.8" y1="149.5" x2="720.8" y2="149.5" stroke="#d0d0d0" stroke-width="1.5"/><text x="713.5" y="154.9" font-size="15" fill="#dcdcdc" text-anchor="end">15</text><line x1="713.8" y1="205.583" x2="720.8" y2="205.583" stroke="#d0d0d0" stroke-width="1.5"/><text x="713.5" y="210.98333333333335" font-size="15" fill="#dcdcdc" text-anchor="end">10</text><line x1="713.8" y1="261.667" x2="720.8" y2="261.667" stroke="#d0d0d0" stroke-width="1.5"/><text x="713.5" y="267.06666666666666" font-size="15" fill="#dcdcdc" text-anchor="end">5</text><line x1="713.8" y1="317.75" x2="720.8" y2="317.75" stroke="#d0d0d0" stroke-width="1.5"/><text x="713.5" y="323.15" font-size="15" fill="#dcdcdc" text-anchor="end">0</text><line x1="713.8" y1="373.833" x2="720.8" y2="373.833" stroke="#d0d0d0" stroke-width="1.5"/><text x="713.5" y="379.23333333333335" font-size="15" fill="#dcdcdc" text-anchor="end">-5</text><line x1="713.8" y1="429.917" x2="720.8" y2="429.917" stroke="#d0d0d0" stroke-width="1.5"/><text x="713.5" y="435.31666666666666" font-size="15" fill="#dcdcdc" text-anchor="end">-10</text><line x1="713.8" y1="486" x2="720.8" y2="486" stroke="#d0d0d0" stroke-width="1.5"/><text x="713.5" y="491.4" font-size="15" fill="#dcdcdc" text-anchor="end">-15</text><text x="783" y="142.6" font-size="15" fill="#dcdcdc" text-anchor="middle" textLength="46.5" lengthAdjust="spacingAndGlyphs">DeltaC</text><text x="797.4" y="501.5" font-size="15" fill="#dcdcdc" text-anchor="middle">100%</text><rect x="735.8" y="316.95" width="123.2" height="18.6" fill="#000"/><rect x="737.1" y="318.05" width="120.6" height="16.6" fill="url(#g15)"/><rect x="930.5" y="149.5" width="154" height="336.5" fill="#262626"/><line x1="930.5" y1="205.583" x2="1084.5" y2="205.583" stroke="#a6a6a6" stroke-width="1.5"/><line x1="930.5" y1="261.667" x2="1084.5" y2="261.667" stroke="#a6a6a6" stroke-width="1.5"/><line x1="930.5" y1="317.75" x2="1084.5" y2="317.75" stroke="#a6a6a6" stroke-width="1.5"/><line x1="930.5" y1="373.833" x2="1084.5" y2="373.833" stroke="#a6a6a6" stroke-width="1.5"/><line x1="930.5" y1="429.917" x2="1084.5" y2="429.917" stroke="#a6a6a6" stroke-width="1.5"/><line x1="929.8" y1="148.8" x2="1085.2" y2="148.8" stroke="#a6a6a6" stroke-width="3"/><line x1="930.5" y1="149.5" x2="930.5" y2="492" stroke="#a6a6a6" stroke-width="1.6"/><line x1="1084.5" y1="149.5" x2="1084.5" y2="492" stroke="#a6a6a6" stroke-width="1.6"/><line x1="930.5" y1="486" x2="1084.5" y2="486" stroke="#a6a6a6" stroke-width="1.6"/><line x1="923.5" y1="149.5" x2="930.5" y2="149.5" stroke="#d0d0d0" stroke-width="1.5"/><text x="923.2" y="154.9" font-size="15" fill="#dcdcdc" text-anchor="end">15</text><line x1="923.5" y1="205.583" x2="930.5" y2="205.583" stroke="#d0d0d0" stroke-width="1.5"/><text x="923.2" y="210.98333333333335" font-size="15" fill="#dcdcdc" text-anchor="end">10</text><line x1="923.5" y1="261.667" x2="930.5" y2="261.667" stroke="#d0d0d0" stroke-width="1.5"/><text x="923.2" y="267.06666666666666" font-size="15" fill="#dcdcdc" text-anchor="end">5</text><line x1="923.5" y1="317.75" x2="930.5" y2="317.75" stroke="#d0d0d0" stroke-width="1.5"/><text x="923.2" y="323.15" font-size="15" fill="#dcdcdc" text-anchor="end">0</text><line x1="923.5" y1="373.833" x2="930.5" y2="373.833" stroke="#d0d0d0" stroke-width="1.5"/><text x="923.2" y="379.23333333333335" font-size="15" fill="#dcdcdc" text-anchor="end">-5</text><line x1="923.5" y1="429.917" x2="930.5" y2="429.917" stroke="#d0d0d0" stroke-width="1.5"/><text x="923.2" y="435.31666666666666" font-size="15" fill="#dcdcdc" text-anchor="end">-10</text><line x1="923.5" y1="486" x2="930.5" y2="486" stroke="#d0d0d0" stroke-width="1.5"/><text x="923.2" y="491.4" font-size="15" fill="#dcdcdc" text-anchor="end">-15</text><text x="993" y="142.6" font-size="15" fill="#dcdcdc" text-anchor="middle" textLength="47.5" lengthAdjust="spacingAndGlyphs">DeltaH</text><text x="1007.5" y="501.5" font-size="15" fill="#dcdcdc" text-anchor="middle">100%</text><rect x="946" y="317.75" width="123" height="3" fill="#050505"/><rect x="947.1" y="318.45" width="120.8" height="1.3" fill="#a4a458"/><rect x="475.5" y="520.5" width="630" height="173" fill="#000"/><rect x="497.2" y="528" width="106.2" height="141" fill="#fff"/><rect x="498.7" y="529.5" width="103.2" height="69.5" fill="#bfc2a8"/><rect x="498.7" y="599" width="103.2" height="68.5" fill="#c0c2a6"/><text x="550.2" y="684.8" font-size="12.5" fill="#fff" text-anchor="middle">20%</text><rect x="620.5" y="528" width="106.2" height="141" fill="#fff"/><rect x="622" y="529.5" width="103.2" height="69.5" fill="#c0c28a"/><rect x="622" y="599" width="103.2" height="68.5" fill="#c0c188"/><text x="673.5" y="684.8" font-size="12.5" fill="#fff" text-anchor="middle">40%</text><rect x="743.5" y="528" width="106.2" height="141" fill="#fff"/><rect x="745" y="529.5" width="103.2" height="69.5" fill="#c1c26a"/><rect x="745" y="599" width="103.2" height="68.5" fill="#c0c068"/><text x="796.5" y="684.8" font-size="12.5" fill="#fff" text-anchor="middle">60%</text><rect x="866.3" y="528" width="106.2" height="141" fill="#fff"/><rect x="867.8" y="529.5" width="103.2" height="69.5" fill="#c1c142"/><rect x="867.8" y="599" width="103.2" height="68.5" fill="#c0c040"/><text x="919.3" y="684.8" font-size="12.5" fill="#fff" text-anchor="middle">80%</text><rect x="989.7" y="528" width="106.2" height="141" fill="#fff"/><rect x="991.2" y="529.5" width="103.2" height="69.5" fill="#c8c80c"/><rect x="991.2" y="599" width="103.2" height="68.5" fill="#c8c600"/><text x="1042.7" y="684.8" font-size="12.5" fill="#fff" text-anchor="middle">100%</text><text x="0" y="0" font-size="13" fill="#fff" text-anchor="middle" transform="translate(489.500 559) rotate(-90)">Actual</text><text x="0" y="0" font-size="13" fill="#fff" text-anchor="middle" transform="translate(489.500 638) rotate(-90)">Target</text><rect x="1116.500" y="118.300" width="731.500" height="587.200" fill="#333" stroke="#c8c410" stroke-width="7.500"/><rect x="1151" y="147" width="690" height="523" fill="#262626"/><text x="1482" y="140.8" font-size="15" fill="#dcdcdc" text-anchor="middle" textLength="82" lengthAdjust="spacingAndGlyphs">CIE 1931 xy</text><g clip-path="url(#cl)"><g filter="url(#bl)"><rect x="1187.9" y="142.376" width="58.7" height="3.5" fill="url(#s0)"/><rect x="1181.5" y="145.376" width="74.7" height="3.5" fill="url(#s1)"/><rect x="1177.8" y="148.376" width="86.9" height="3.5" fill="url(#s2)"/><rect x="1174.0" y="151.376" width="97.8" height="3.5" fill="url(#s3)"/><rect x="1171.3" y="154.376" width="107.4" height="3.5" fill="url(#s4)"/><rect x="1169.1" y="157.376" width="116.4" height="3.5" fill="url(#s5)"/><rect x="1166.8" y="160.376" width="125.2" height="3.5" fill="url(#s6)"/><rect x="1164.7" y="163.376" width="133.7" height="3.5" fill="url(#s7)"/><rect x="1163.1" y="166.376" width="141.3" height="3.5" fill="url(#s8)"/><rect x="1161.6" y="169.376" width="148.7" height="3.5" fill="url(#s9)"/><rect x="1160.1" y="172.376" width="156.1" height="3.5" fill="url(#s10)"/><rect x="1158.5" y="175.376" width="163.2" height="3.5" fill="url(#s11)"/><rect x="1157.4" y="178.376" width="169.9" height="3.5" fill="url(#s12)"/><rect x="1156.4" y="181.376" width="176.2" height="3.5" fill="url(#s13)"/><rect x="1155.3" y="184.376" width="182.5" height="3.5" fill="url(#s14)"/><rect x="1154.3" y="187.376" width="188.6" height="3.5" fill="url(#s15)"/><rect x="1153.3" y="190.376" width="194.6" height="3.5" fill="url(#s16)"/><rect x="1152.5" y="193.376" width="200.4" height="3.5" fill="url(#s17)"/><rect x="1151.9" y="196.376" width="205.9" height="3.5" fill="url(#s18)"/><rect x="1151.2" y="199.376" width="211.3" height="3.5" fill="url(#s19)"/><rect x="1151.0" y="202.376" width="216.3" height="3.5" fill="url(#s20)"/><rect x="1151.0" y="205.376" width="220.9" height="3.5" fill="url(#s21)"/><rect x="1151.0" y="208.376" width="225.5" height="3.5" fill="url(#s22)"/><rect x="1151.0" y="211.376" width="230.0" height="3.5" fill="url(#s23)"/><rect x="1151.0" y="214.376" width="234.6" height="3.5" fill="url(#s24)"/><rect x="1151.0" y="217.376" width="239.0" height="3.5" fill="url(#s25)"/><rect x="1151.0" y="220.376" width="243.4" height="3.5" fill="url(#s26)"/><rect x="1151.0" y="223.376" width="247.8" height="3.5" fill="url(#s27)"/><rect x="1151.0" y="226.376" width="252.1" height="3.5" fill="url(#s28)"/><rect x="1151.0" y="229.376" width="256.4" height="3.5" fill="url(#s29)"/><rect x="1151.0" y="232.376" width="260.7" height="3.5" fill="url(#s30)"/><rect x="1151.0" y="235.376" width="265.0" height="3.5" fill="url(#s31)"/><rect x="1151.0" y="238.376" width="269.2" height="3.5" fill="url(#s32)"/><rect x="1151.0" y="241.376" width="273.4" height="3.5" fill="url(#s33)"/><rect x="1151.0" y="244.376" width="277.6" height="3.5" fill="url(#s34)"/><rect x="1151.0" y="247.376" width="281.8" height="3.5" fill="url(#s35)"/><rect x="1151.0" y="250.376" width="285.9" height="3.5" fill="url(#s36)"/><rect x="1151.0" y="253.376" width="290.1" height="3.5" fill="url(#s37)"/><rect x="1151.0" y="256.376" width="294.2" height="3.5" fill="url(#s38)"/><rect x="1151.0" y="259.376" width="298.3" height="3.5" fill="url(#s39)"/><rect x="1151.0" y="262.376" width="302.4" height="3.5" fill="url(#s40)"/><rect x="1151.0" y="265.376" width="306.5" height="3.5" fill="url(#s41)"/><rect x="1151.0" y="268.376" width="310.6" height="3.5" fill="url(#s42)"/><rect x="1151.0" y="271.376" width="314.7" height="3.5" fill="url(#s43)"/><rect x="1151.0" y="274.376" width="318.7" height="3.5" fill="url(#s44)"/><rect x="1151.0" y="277.376" width="322.8" height="3.5" fill="url(#s45)"/><rect x="1151.0" y="280.376" width="326.8" height="3.5" fill="url(#s46)"/><rect x="1151.0" y="283.376" width="330.8" height="3.5" fill="url(#s47)"/><rect x="1151.0" y="286.376" width="334.8" height="3.5" fill="url(#s48)"/><rect x="1151.0" y="289.376" width="338.9" height="3.5" fill="url(#s49)"/><rect x="1151.0" y="292.376" width="342.9" height="3.5" fill="url(#s50)"/><rect x="1151.0" y="295.376" width="346.9" height="3.5" fill="url(#s51)"/><rect x="1151.0" y="298.376" width="350.9" height="3.5" fill="url(#s52)"/><rect x="1151.0" y="301.376" width="354.9" height="3.5" fill="url(#s53)"/><rect x="1151.0" y="304.376" width="358.9" height="3.5" fill="url(#s54)"/><rect x="1151.0" y="307.376" width="362.9" height="3.5" fill="url(#s55)"/><rect x="1151.0" y="310.376" width="366.9" height="3.5" fill="url(#s56)"/><rect x="1151.0" y="313.376" width="370.9" height="3.5" fill="url(#s57)"/><rect x="1151.0" y="316.376" width="374.9" height="3.5" fill="url(#s58)"/><rect x="1151.0" y="319.376" width="378.9" height="3.5" fill="url(#s59)"/><rect x="1151.0" y="322.376" width="382.9" height="3.5" fill="url(#s60)"/><rect x="1151.0" y="325.376" width="386.8" height="3.5" fill="url(#s61)"/><rect x="1151.0" y="328.376" width="390.8" height="3.5" fill="url(#s62)"/><rect x="1151.0" y="331.376" width="394.8" height="3.5" fill="url(#s63)"/><rect x="1151.0" y="334.376" width="398.7" height="3.5" fill="url(#s64)"/><rect x="1151.0" y="337.376" width="402.7" height="3.5" fill="url(#s65)"/><rect x="1151.0" y="340.376" width="406.7" height="3.5" fill="url(#s66)"/><rect x="1151.0" y="343.376" width="410.6" height="3.5" fill="url(#s67)"/><rect x="1151.0" y="346.376" width="414.6" height="3.5" fill="url(#s68)"/><rect x="1151.0" y="349.376" width="418.6" height="3.5" fill="url(#s69)"/><rect x="1151.0" y="352.376" width="422.5" height="3.5" fill="url(#s70)"/><rect x="1151.2" y="355.376" width="426.3" height="3.5" fill="url(#s71)"/><rect x="1151.6" y="358.376" width="429.8" height="3.5" fill="url(#s72)"/><rect x="1152.0" y="361.376" width="433.4" height="3.5" fill="url(#s73)"/><rect x="1152.4" y="364.376" width="437.0" height="3.5" fill="url(#s74)"/><rect x="1152.8" y="367.376" width="440.5" height="3.5" fill="url(#s75)"/><rect x="1153.2" y="370.376" width="444.1" height="3.5" fill="url(#s76)"/><rect x="1153.7" y="373.376" width="447.5" height="3.5" fill="url(#s77)"/><rect x="1154.2" y="376.376" width="451.0" height="3.5" fill="url(#s78)"/><rect x="1154.7" y="379.376" width="454.5" height="3.5" fill="url(#s79)"/><rect x="1155.2" y="382.376" width="458.0" height="3.5" fill="url(#s80)"/><rect x="1155.7" y="385.376" width="461.5" height="3.5" fill="url(#s81)"/><rect x="1156.2" y="388.376" width="465.0" height="3.5" fill="url(#s82)"/><rect x="1156.7" y="391.376" width="468.4" height="3.5" fill="url(#s83)"/><rect x="1157.1" y="394.376" width="471.9" height="3.5" fill="url(#s84)"/><rect x="1157.7" y="397.376" width="475.3" height="3.5" fill="url(#s85)"/><rect x="1158.3" y="400.376" width="478.7" height="3.5" fill="url(#s86)"/><rect x="1158.8" y="403.376" width="482.1" height="3.5" fill="url(#s87)"/><rect x="1159.4" y="406.376" width="485.5" height="3.5" fill="url(#s88)"/><rect x="1160.0" y="409.376" width="488.9" height="3.5" fill="url(#s89)"/><rect x="1160.5" y="412.376" width="492.2" height="3.5" fill="url(#s90)"/><rect x="1161.1" y="415.376" width="495.6" height="3.5" fill="url(#s91)"/><rect x="1161.7" y="418.376" width="499.0" height="3.5" fill="url(#s92)"/><rect x="1162.3" y="421.376" width="502.4" height="3.5" fill="url(#s93)"/><rect x="1162.9" y="424.376" width="505.7" height="3.5" fill="url(#s94)"/><rect x="1163.6" y="427.376" width="509.0" height="3.5" fill="url(#s95)"/><rect x="1164.2" y="430.376" width="512.4" height="3.5" fill="url(#s96)"/><rect x="1164.9" y="433.376" width="515.7" height="3.5" fill="url(#s97)"/><rect x="1165.5" y="436.376" width="519.0" height="3.5" fill="url(#s98)"/><rect x="1166.2" y="439.376" width="522.3" height="3.5" fill="url(#s99)"/><rect x="1166.9" y="442.376" width="525.6" height="3.5" fill="url(#s100)"/><rect x="1167.5" y="445.376" width="529.0" height="3.5" fill="url(#s101)"/><rect x="1168.2" y="448.376" width="532.2" height="3.5" fill="url(#s102)"/><rect x="1169.0" y="451.376" width="535.5" height="3.5" fill="url(#s103)"/><rect x="1169.7" y="454.376" width="538.7" height="3.5" fill="url(#s104)"/><rect x="1170.4" y="457.376" width="541.9" height="3.5" fill="url(#s105)"/><rect x="1171.2" y="460.376" width="545.1" height="3.5" fill="url(#s106)"/><rect x="1171.9" y="463.376" width="548.3" height="3.5" fill="url(#s107)"/><rect x="1172.7" y="466.376" width="551.5" height="3.5" fill="url(#s108)"/><rect x="1173.4" y="469.376" width="554.8" height="3.5" fill="url(#s109)"/><rect x="1174.2" y="472.376" width="558.0" height="3.5" fill="url(#s110)"/><rect x="1175.0" y="475.376" width="561.1" height="3.5" fill="url(#s111)"/><rect x="1175.8" y="478.376" width="564.3" height="3.5" fill="url(#s112)"/><rect x="1176.6" y="481.376" width="567.4" height="3.5" fill="url(#s113)"/><rect x="1177.4" y="484.376" width="570.6" height="3.5" fill="url(#s114)"/><rect x="1178.3" y="487.376" width="573.8" height="3.5" fill="url(#s115)"/><rect x="1179.1" y="490.376" width="576.9" height="3.5" fill="url(#s116)"/><rect x="1179.9" y="493.376" width="580.0" height="3.5" fill="url(#s117)"/><rect x="1180.7" y="496.376" width="581.2" height="3.5" fill="url(#s118)"/><rect x="1181.6" y="499.376" width="581.6" height="3.5" fill="url(#s119)"/><rect x="1182.5" y="502.376" width="576.7" height="3.5" fill="url(#s120)"/><rect x="1183.4" y="505.376" width="580.0" height="3.5" fill="url(#s121)"/><rect x="1184.3" y="508.376" width="575.6" height="3.5" fill="url(#s122)"/><rect x="1185.2" y="511.376" width="576.8" height="3.5" fill="url(#s123)"/><rect x="1186.1" y="514.376" width="577.1" height="3.5" fill="url(#s124)"/><rect x="1187.0" y="517.376" width="569.2" height="3.5" fill="url(#s125)"/><rect x="1188.0" y="520.376" width="559.5" height="3.5" fill="url(#s126)"/><rect x="1189.0" y="523.376" width="549.9" height="3.5" fill="url(#s127)"/><rect x="1190.0" y="526.376" width="540.2" height="3.5" fill="url(#s128)"/><rect x="1190.9" y="529.376" width="530.6" height="3.5" fill="url(#s129)"/><rect x="1191.9" y="532.376" width="521.0" height="3.5" fill="url(#s130)"/><rect x="1192.9" y="535.376" width="511.3" height="3.5" fill="url(#s131)"/><rect x="1194.0" y="538.376" width="501.6" height="3.5" fill="url(#s132)"/><rect x="1195.1" y="541.376" width="491.9" height="3.5" fill="url(#s133)"/><rect x="1196.1" y="544.376" width="482.1" height="3.5" fill="url(#s134)"/><rect x="1197.2" y="547.376" width="472.4" height="3.5" fill="url(#s135)"/><rect x="1198.3" y="550.376" width="462.7" height="3.5" fill="url(#s136)"/><rect x="1199.4" y="553.376" width="452.9" height="3.5" fill="url(#s137)"/><rect x="1200.6" y="556.376" width="443.1" height="3.5" fill="url(#s138)"/><rect x="1201.8" y="559.376" width="433.2" height="3.5" fill="url(#s139)"/><rect x="1203.0" y="562.376" width="423.3" height="3.5" fill="url(#s140)"/><rect x="1204.2" y="565.376" width="413.5" height="3.5" fill="url(#s141)"/><rect x="1205.4" y="568.376" width="403.6" height="3.5" fill="url(#s142)"/><rect x="1206.7" y="571.376" width="393.7" height="3.5" fill="url(#s143)"/><rect x="1208.0" y="574.376" width="383.6" height="3.5" fill="url(#s144)"/><rect x="1209.4" y="577.376" width="373.6" height="3.5" fill="url(#s145)"/><rect x="1210.7" y="580.376" width="363.6" height="3.5" fill="url(#s146)"/><rect x="1212.1" y="583.376" width="353.6" height="3.5" fill="url(#s147)"/><rect x="1213.5" y="586.376" width="343.6" height="3.5" fill="url(#s148)"/><rect x="1214.9" y="589.376" width="333.5" height="3.5" fill="url(#s149)"/><rect x="1216.3" y="592.376" width="323.4" height="3.5" fill="url(#s150)"/><rect x="1217.7" y="595.376" width="313.3" height="3.5" fill="url(#s151)"/><rect x="1219.2" y="598.376" width="303.2" height="3.5" fill="url(#s152)"/><rect x="1220.7" y="601.376" width="293.1" height="3.5" fill="url(#s153)"/><rect x="1222.2" y="604.376" width="282.9" height="3.5" fill="url(#s154)"/><rect x="1223.7" y="607.376" width="272.8" height="3.5" fill="url(#s155)"/><rect x="1225.3" y="610.376" width="262.5" height="3.5" fill="url(#s156)"/><rect x="1226.9" y="613.376" width="252.3" height="3.5" fill="url(#s157)"/><rect x="1228.5" y="616.376" width="242.0" height="3.5" fill="url(#s158)"/><rect x="1230.2" y="619.376" width="231.7" height="3.5" fill="url(#s159)"/><rect x="1231.8" y="622.376" width="221.3" height="3.5" fill="url(#s160)"/><rect x="1233.6" y="625.376" width="210.9" height="3.5" fill="url(#s161)"/><rect x="1235.4" y="628.376" width="200.4" height="3.5" fill="url(#s162)"/><rect x="1237.3" y="631.376" width="189.9" height="3.5" fill="url(#s163)"/><rect x="1239.3" y="634.376" width="179.2" height="3.5" fill="url(#s164)"/><rect x="1241.3" y="637.376" width="168.6" height="3.5" fill="url(#s165)"/><rect x="1243.4" y="640.376" width="157.8" height="3.5" fill="url(#s166)"/><rect x="1245.7" y="643.376" width="146.9" height="3.5" fill="url(#s167)"/><rect x="1248.0" y="646.376" width="135.9" height="3.5" fill="url(#s168)"/><rect x="1250.5" y="649.376" width="124.7" height="3.5" fill="url(#s169)"/><rect x="1253.2" y="652.376" width="113.3" height="3.5" fill="url(#s170)"/><rect x="1256.2" y="655.376" width="101.7" height="3.5" fill="url(#s171)"/><rect x="1259.6" y="658.376" width="89.7" height="3.5" fill="url(#s172)"/><rect x="1263.3" y="661.376" width="77.3" height="3.5" fill="url(#s173)"/><rect x="1267.4" y="664.376" width="64.6" height="3.5" fill="url(#s174)"/><rect x="1271.8" y="667.376" width="51.4" height="3.5" fill="url(#s175)"/><rect x="1276.4" y="670.376" width="38.2" height="3.5" fill="url(#s176)"/></g><path d="M1151 147H1841V670H1151zM1675.2 464.7L1323.0 228.4L1273.8 632.7z" fill="#000" fill-opacity="0.4" fill-rule="evenodd"/></g><line x1="1150.5" y1="147" x2="1841.5" y2="147" stroke="#a6a6a6" stroke-width="2"/><line x1="1841" y1="147" x2="1841" y2="670" stroke="#a6a6a6" stroke-width="2"/><line x1="1151" y1="147" x2="1151" y2="677" stroke="#a6a6a6" stroke-width="2"/><line x1="1144" y1="670" x2="1842" y2="670" stroke="#a6a6a6" stroke-width="2"/><line x1="1144" y1="670" x2="1151" y2="670" stroke="#d0d0d0" stroke-width="1.6"/><text x="1143.5" y="676.5" font-size="15" fill="#dcdcdc" text-anchor="end">0</text><text x="1151.0" y="693" font-size="15" fill="#dcdcdc" text-anchor="middle">0</text><line x1="1144" y1="607.8" x2="1151" y2="607.8" stroke="#d0d0d0" stroke-width="1.6"/><text x="1143.5" y="614.3" font-size="15" fill="#dcdcdc" text-anchor="end">0,1</text><line x1="1232.9" y1="670" x2="1232.9" y2="677" stroke="#a6a6a6" stroke-width="1.8"/><text x="1232.9" y="693" font-size="15" fill="#dcdcdc" text-anchor="middle">0,1</text><line x1="1144" y1="545.6" x2="1151" y2="545.6" stroke="#d0d0d0" stroke-width="1.6"/><text x="1143.5" y="552.1" font-size="15" fill="#dcdcdc" text-anchor="end">0,2</text><line x1="1314.8" y1="670" x2="1314.8" y2="677" stroke="#a6a6a6" stroke-width="1.8"/><text x="1314.8" y="693" font-size="15" fill="#dcdcdc" text-anchor="middle">0,2</text><line x1="1144" y1="483.4" x2="1151" y2="483.4" stroke="#d0d0d0" stroke-width="1.6"/><text x="1143.5" y="489.9" font-size="15" fill="#dcdcdc" text-anchor="end">0,3</text><line x1="1396.7" y1="670" x2="1396.7" y2="677" stroke="#a6a6a6" stroke-width="1.8"/><text x="1396.7" y="693" font-size="15" fill="#dcdcdc" text-anchor="middle">0,3</text><line x1="1144" y1="421.2" x2="1151" y2="421.2" stroke="#d0d0d0" stroke-width="1.6"/><text x="1143.5" y="427.7" font-size="15" fill="#dcdcdc" text-anchor="end">0,4</text><line x1="1478.6" y1="670" x2="1478.6" y2="677" stroke="#a6a6a6" stroke-width="1.8"/><text x="1478.6" y="693" font-size="15" fill="#dcdcdc" text-anchor="middle">0,4</text><line x1="1144" y1="359" x2="1151" y2="359" stroke="#d0d0d0" stroke-width="1.6"/><text x="1143.5" y="365.5" font-size="15" fill="#dcdcdc" text-anchor="end">0,5</text><line x1="1560.5" y1="670" x2="1560.5" y2="677" stroke="#a6a6a6" stroke-width="1.8"/><text x="1560.5" y="693" font-size="15" fill="#dcdcdc" text-anchor="middle">0,5</text><line x1="1144" y1="296.8" x2="1151" y2="296.8" stroke="#d0d0d0" stroke-width="1.6"/><text x="1143.5" y="303.3" font-size="15" fill="#dcdcdc" text-anchor="end">0,6</text><line x1="1642.4" y1="670" x2="1642.4" y2="677" stroke="#a6a6a6" stroke-width="1.8"/><text x="1642.4" y="693" font-size="15" fill="#dcdcdc" text-anchor="middle">0,6</text><line x1="1144" y1="234.6" x2="1151" y2="234.6" stroke="#d0d0d0" stroke-width="1.6"/><text x="1143.5" y="241.10000000000002" font-size="15" fill="#dcdcdc" text-anchor="end">0,7</text><line x1="1724.3" y1="670" x2="1724.3" y2="677" stroke="#a6a6a6" stroke-width="1.8"/><text x="1724.3" y="693" font-size="15" fill="#dcdcdc" text-anchor="middle">0,7</text><line x1="1144" y1="172.4" x2="1151" y2="172.4" stroke="#d0d0d0" stroke-width="1.6"/><text x="1143.5" y="178.89999999999998" font-size="15" fill="#dcdcdc" text-anchor="end">0,8</text><line x1="1806.2" y1="670" x2="1806.2" y2="677" stroke="#a6a6a6" stroke-width="1.8"/><text x="1806.2" y="693" font-size="15" fill="#dcdcdc" text-anchor="middle">0,8</text><rect x="1315.2" y="219.0" width="14.2" height="14.2" fill="none" stroke="#ffffff" stroke-width="1.6"/><rect x="1332.8" y="267.2" width="14.2" height="14.2" fill="none" stroke="#ffffff" stroke-width="1.6"/><rect x="1349.9" y="316.1" width="14.2" height="14.2" fill="none" stroke="#ffffff" stroke-width="1.6"/><rect x="1367.1" y="364.2" width="14.2" height="14.2" fill="none" stroke="#ffffff" stroke-width="1.6"/><rect x="1383.0" y="408.9" width="14.2" height="14.2" fill="none" stroke="#ffffff" stroke-width="1.6"/><rect x="1493.4" y="339.5" width="14.2" height="14.2" fill="none" stroke="#ffffff" stroke-width="1.6"/><rect x="1475.8" y="362.3" width="14.2" height="14.2" fill="none" stroke="#ffffff" stroke-width="1.6"/><rect x="1456.8" y="386.9" width="14.2" height="14.2" fill="none" stroke="#ffffff" stroke-width="1.6"/><rect x="1438.0" y="410.6" width="14.2" height="14.2" fill="none" stroke="#ffffff" stroke-width="1.6"/><rect x="1418.5" y="435.0" width="14.2" height="14.2" fill="none" stroke="#ffffff" stroke-width="1.6"/><rect x="1452.9" y="456.6" width="14.2" height="14.2" fill="none" stroke="#ffffff" stroke-width="1.6"/><rect x="1507.9" y="456.5" width="14.2" height="14.2" fill="none" stroke="#ffffff" stroke-width="1.6"/><rect x="1561.6" y="456.4" width="14.2" height="14.2" fill="none" stroke="#ffffff" stroke-width="1.6"/><rect x="1616.6" y="456.4" width="14.2" height="14.2" fill="none" stroke="#ffffff" stroke-width="1.6"/><rect x="1668.7" y="456.4" width="14.2" height="14.2" fill="none" stroke="#ffffff" stroke-width="1.6"/><rect x="1287.5" y="457.7" width="14.2" height="14.2" fill="none" stroke="#ffffff" stroke-width="1.6"/><rect x="1311.0" y="457.9" width="14.2" height="14.2" fill="none" stroke="#ffffff" stroke-width="1.6"/><rect x="1332.6" y="457.9" width="14.2" height="14.2" fill="none" stroke="#ffffff" stroke-width="1.6"/><rect x="1354.6" y="457.9" width="14.2" height="14.2" fill="none" stroke="#ffffff" stroke-width="1.6"/><rect x="1377.3" y="457.9" width="14.2" height="14.2" fill="none" stroke="#ffffff" stroke-width="1.6"/><rect x="1407.8" y="476.8" width="14.2" height="14.2" fill="none" stroke="#ffffff" stroke-width="1.6"/><rect x="1413.8" y="496.9" width="14.2" height="14.2" fill="none" stroke="#ffffff" stroke-width="1.6"/><rect x="1420.7" y="514.5" width="14.2" height="14.2" fill="none" stroke="#ffffff" stroke-width="1.6"/><rect x="1427.9" y="534.8" width="14.2" height="14.2" fill="none" stroke="#ffffff" stroke-width="1.6"/><rect x="1434.0" y="555.1" width="14.2" height="14.2" fill="none" stroke="#ffffff" stroke-width="1.6"/><rect x="1372.9" y="491.9" width="14.2" height="14.2" fill="none" stroke="#ffffff" stroke-width="1.6"/><rect x="1345.2" y="526.3" width="14.2" height="14.2" fill="none" stroke="#ffffff" stroke-width="1.6"/><rect x="1319.9" y="559.5" width="14.2" height="14.2" fill="none" stroke="#ffffff" stroke-width="1.6"/><rect x="1293.4" y="590.9" width="14.2" height="14.2" fill="none" stroke="#ffffff" stroke-width="1.6"/><rect x="1265.7" y="625.0" width="14.2" height="14.2" fill="none" stroke="#ffffff" stroke-width="1.6"/><rect x="1400.5" y="458.1" width="13.8" height="13.8" fill="none" stroke="#0c0c0c" stroke-width="2.2"/><circle cx="1313.9" cy="234.9" r="4.3" fill="#2ea82e" stroke="#0a0a0a" stroke-width="1.4"/><circle cx="1330.8" cy="279.9" r="4.3" fill="#46b446" stroke="#0a0a0a" stroke-width="1.4"/><circle cx="1349.7" cy="326.2" r="4.3" fill="#6cbc62" stroke="#0a0a0a" stroke-width="1.4"/><circle cx="1368.6" cy="372.7" r="4.3" fill="#90b882" stroke="#0a0a0a" stroke-width="1.4"/><circle cx="1386.0" cy="417.3" r="4.3" fill="#a2bc98" stroke="#0a0a0a" stroke-width="1.4"/><circle cx="1500.5" cy="347.6" r="4.3" fill="#bcbc30" stroke="#0a0a0a" stroke-width="1.4"/><circle cx="1481.5" cy="370.9" r="4.3" fill="#bebe58" stroke="#0a0a0a" stroke-width="1.4"/><circle cx="1462.7" cy="393.9" r="4.3" fill="#bebe70" stroke="#0a0a0a" stroke-width="1.4"/><circle cx="1442.5" cy="418.8" r="4.3" fill="#bcbc88" stroke="#0a0a0a" stroke-width="1.4"/><circle cx="1423.5" cy="442.0" r="4.3" fill="#bebea6" stroke="#0a0a0a" stroke-width="1.4"/><circle cx="1459.7" cy="464.8" r="4.3" fill="#bc9696" stroke="#0a0a0a" stroke-width="1.4"/><circle cx="1517.7" cy="465.1" r="4.3" fill="#c4707e" stroke="#0a0a0a" stroke-width="1.4"/><circle cx="1575.8" cy="463.6" r="4.3" fill="#c8646e" stroke="#0a0a0a" stroke-width="1.4"/><circle cx="1632.0" cy="463.6" r="4.3" fill="#cd5a5f" stroke="#0a0a0a" stroke-width="1.4"/><circle cx="1688.9" cy="462.0" r="4.3" fill="#b00808" stroke="#0a0a0a" stroke-width="1.4"/><circle cx="1286.2" cy="468.2" r="4.3" fill="#18b8b0" stroke="#0a0a0a" stroke-width="1.4"/><circle cx="1310.4" cy="466.7" r="4.3" fill="#78b8b4" stroke="#0a0a0a" stroke-width="1.4"/><circle cx="1333.4" cy="466.7" r="4.3" fill="#8cb9b4" stroke="#0a0a0a" stroke-width="1.4"/><circle cx="1355.3" cy="466.5" r="4.3" fill="#98b8b4" stroke="#0a0a0a" stroke-width="1.4"/><circle cx="1380.3" cy="466.5" r="4.3" fill="#a8bab6" stroke="#0a0a0a" stroke-width="1.4"/><circle cx="1404.8" cy="465.0" r="4.3" fill="#ffffff" stroke="#0a0a0a" stroke-width="1.4"/><circle cx="1410.4" cy="485.4" r="4.3" fill="#b8a6b8" stroke="#0a0a0a" stroke-width="1.4"/><circle cx="1419.4" cy="505.7" r="4.3" fill="#be96be" stroke="#0a0a0a" stroke-width="1.4"/><circle cx="1425.0" cy="522.9" r="4.3" fill="#be7dbe" stroke="#0a0a0a" stroke-width="1.4"/><circle cx="1432.1" cy="541.8" r="4.3" fill="#be64be" stroke="#0a0a0a" stroke-width="1.4"/><circle cx="1441.0" cy="562.2" r="4.3" fill="#c414c4" stroke="#0a0a0a" stroke-width="1.4"/><circle cx="1375.6" cy="499.6" r="4.3" fill="#a0a0be" stroke="#0a0a0a" stroke-width="1.4"/><circle cx="1348.3" cy="534.8" r="4.3" fill="#8c8cc0" stroke="#0a0a0a" stroke-width="1.4"/><circle cx="1321.0" cy="568.0" r="4.3" fill="#7474c0" stroke="#0a0a0a" stroke-width="1.4"/><circle cx="1294.8" cy="598.5" r="4.3" fill="#5a5ac8" stroke="#0a0a0a" stroke-width="1.4"/><circle cx="1267.8" cy="632.1" r="4.3" fill="#0c0cd2" stroke="#0a0a0a" stroke-width="1.4"/><circle cx="1358.3" cy="505.9" r="4.8" fill="#000"/><g clip-path="url(#ci)"><rect x="1601" y="154" width="233" height="6.5" fill="url(#i0)"/><rect x="1601" y="160" width="233" height="6.5" fill="url(#i1)"/><rect x="1601" y="166" width="233" height="6.5" fill="url(#i2)"/><rect x="1601" y="172" width="233" height="6.5" fill="url(#i3)"/><rect x="1601" y="178" width="233" height="6.5" fill="url(#i4)"/><rect x="1601" y="184" width="233" height="6.5" fill="url(#i5)"/><rect x="1601" y="190" width="233" height="6.5" fill="url(#i6)"/><rect x="1601" y="196" width="233" height="6.5" fill="url(#i7)"/><rect x="1601" y="202" width="233" height="6.5" fill="url(#i8)"/><rect x="1601" y="208" width="233" height="6.5" fill="url(#i9)"/><rect x="1601" y="214" width="233" height="6.5" fill="url(#i10)"/><rect x="1601" y="220" width="233" height="6.5" fill="url(#i11)"/><rect x="1601" y="226" width="233" height="6.5" fill="url(#i12)"/><rect x="1601" y="232" width="233" height="6.5" fill="url(#i13)"/><rect x="1601" y="238" width="233" height="6.5" fill="url(#i14)"/><rect x="1601" y="244" width="233" height="6.5" fill="url(#i15)"/><rect x="1601" y="250" width="233" height="6.5" fill="url(#i16)"/><rect x="1601" y="256" width="233" height="6.5" fill="url(#i17)"/><rect x="1601" y="262" width="233" height="6.5" fill="url(#i18)"/><rect x="1601" y="268" width="233" height="6.5" fill="url(#i19)"/><rect x="1601" y="274" width="233" height="6.5" fill="url(#i20)"/><rect x="1601" y="280" width="233" height="6.5" fill="url(#i21)"/><rect x="1601" y="286" width="233" height="6.5" fill="url(#i22)"/><rect x="1601" y="292" width="233" height="6.5" fill="url(#i23)"/><rect x="1601" y="298" width="233" height="6.5" fill="url(#i24)"/><rect x="1601" y="304" width="233" height="6.5" fill="url(#i25)"/><rect x="1601" y="310" width="233" height="6.5" fill="url(#i26)"/><rect x="1601" y="316" width="233" height="6.5" fill="url(#i27)"/><rect x="1601" y="322" width="233" height="6.5" fill="url(#i28)"/><rect x="1601" y="328" width="233" height="6.5" fill="url(#i29)"/><rect x="1601" y="334" width="233" height="6.5" fill="url(#i30)"/><rect x="1601" y="340" width="233" height="6.5" fill="url(#i31)"/><rect x="1601" y="346" width="233" height="6.5" fill="url(#i32)"/><path d="M605.8 -576.5L2807.7 1064.6L2807.7 -576.5z" fill="#000" fill-opacity="0.4"/></g><rect x="1601" y="154" width="233" height="196.5" fill="none" stroke="#8c8c8c" stroke-width="2"/><rect x="1709.2" y="243.8" width="14.5" height="14.5" fill="none" stroke="#fff" stroke-width="1.7"/><circle cx="1716.3" cy="263.3" r="4.6" fill="#b4b414" stroke="#0a0a0a" stroke-width="1.4"/><rect x="452.3" y="750" width="269.9" height="191.5" fill="#262626"/><line x1="452.3" y1="797.875" x2="722.2" y2="797.875" stroke="#a6a6a6" stroke-width="1.5"/><line x1="452.3" y1="845.75" x2="722.2" y2="845.75" stroke="#a6a6a6" stroke-width="1.5"/><line x1="452.3" y1="893.625" x2="722.2" y2="893.625" stroke="#a6a6a6" stroke-width="1.5"/><line x1="451.6" y1="749.5" x2="722.9" y2="749.5" stroke="#a6a6a6" stroke-width="2.6"/><line x1="452.3" y1="750" x2="452.3" y2="947.5" stroke="#a6a6a6" stroke-width="1.6"/><line x1="722.2" y1="750" x2="722.2" y2="947.5" stroke="#a6a6a6" stroke-width="1.6"/><line x1="452.3" y1="941.5" x2="722.2" y2="941.5" stroke="#a6a6a6" stroke-width="1.6"/><line x1="445.3" y1="750" x2="452.3" y2="750" stroke="#d0d0d0" stroke-width="1.5"/><text x="445.0" y="756.1" font-size="15" fill="#dcdcdc" text-anchor="end">10</text><line x1="445.3" y1="797.875" x2="452.3" y2="797.875" stroke="#d0d0d0" stroke-width="1.5"/><text x="445.0" y="803.975" font-size="15" fill="#dcdcdc" text-anchor="end">5</text><line x1="445.3" y1="845.75" x2="452.3" y2="845.75" stroke="#d0d0d0" stroke-width="1.5"/><text x="445.0" y="851.85" font-size="15" fill="#dcdcdc" text-anchor="end">0</text><line x1="445.3" y1="893.625" x2="452.3" y2="893.625" stroke="#d0d0d0" stroke-width="1.5"/><text x="445.0" y="899.725" font-size="15" fill="#dcdcdc" text-anchor="end">-5</text><line x1="445.3" y1="941.5" x2="452.3" y2="941.5" stroke="#d0d0d0" stroke-width="1.5"/><text x="445.0" y="947.6" font-size="15" fill="#dcdcdc" text-anchor="end">-10</text><text x="572.5" y="743.7" font-size="15" fill="#dcdcdc" text-anchor="middle" textLength="88" lengthAdjust="spacingAndGlyphs">RGB Balance</text><text x="587.5" y="957.6" font-size="15" fill="#dcdcdc" text-anchor="middle">100%</text><rect x="478.5" y="845.45" width="74" height="3.8" fill="#000"/><rect x="479.5" y="846.35" width="72" height="1.6" fill="#b01818"/><rect x="551.5" y="845.45" width="73" height="12.8" fill="#000"/><rect x="552.7" y="846.45" width="70.6" height="10.6" fill="url(#g16)"/><rect x="624.8" y="760" width="72" height="86.35" fill="#000"/><rect x="626" y="761.2" width="69.6" height="83.95" fill="url(#g17)"/><rect x="745" y="725" width="768" height="32" fill="url(#g18)"/><rect x="745" y="725" width="21" height="32" fill="#000"/><text transform="translate(943.3 747.3) scale(1.29 1)" font-size="16.5" fill="#f6f6f6">20%</text><text transform="translate(1058.7 747.3) scale(1.29 1)" font-size="16.5" fill="#f6f6f6">40%</text><text transform="translate(1173.8 747.3) scale(1.29 1)" font-size="16.5" fill="#f6f6f6">60%</text><text transform="translate(1289 747.3) scale(1.29 1)" font-size="16.5" fill="#f6f6f6">80%</text><text transform="translate(1404.5 747.3) scale(1.29 1)" font-size="16.5" fill="#f6f6f6">100%</text><rect x="745" y="757" width="768" height="30.5" fill="#404040"/><rect x="745" y="757" width="21" height="30.5" fill="#2c2c2c"/><text transform="translate(773 779.3) scale(1.29 1)" font-size="18.5" fill="#f4f4f4" textLength="65.1" lengthAdjust="spacingAndGlyphs">x: CIE31</text><text transform="translate(943.3 779.3) scale(1.29 1)" font-size="18.5" fill="#f4f4f4">0,3320</text><text transform="translate(1058.7 779.3) scale(1.29 1)" font-size="18.5" fill="#f4f4f4">0,3563</text><text transform="translate(1173.8 779.3) scale(1.29 1)" font-size="18.5" fill="#f4f4f4">0,3805</text><text transform="translate(1289 779.3) scale(1.29 1)" font-size="18.5" fill="#f4f4f4">0,4040</text><text transform="translate(1404.5 779.3) scale(1.29 1)" font-size="18.5" fill="#f4f4f4">0,4269</text><rect x="745" y="787.5" width="768" height="30.2" fill="#808080"/><rect x="745" y="787.5" width="21" height="30.2" fill="#3a3a3a"/><text transform="translate(773 809.8) scale(1.29 1)" font-size="18.5" fill="#ececec" textLength="65.5" lengthAdjust="spacingAndGlyphs">y: CIE31</text><text transform="translate(943.3 809.8) scale(1.29 1)" font-size="18.5" fill="#ececec">0,3642</text><text transform="translate(1058.7 809.8) scale(1.29 1)" font-size="18.5" fill="#ececec">0,4030</text><text transform="translate(1173.8 809.8) scale(1.29 1)" font-size="18.5" fill="#ececec">0,4416</text><text transform="translate(1289 809.8) scale(1.29 1)" font-size="18.5" fill="#ececec">0,4791</text><text transform="translate(1404.5 809.8) scale(1.29 1)" font-size="18.5" fill="#ececec">0,5153</text><rect x="745" y="817.7" width="768" height="30.3" fill="#404040"/><rect x="745" y="817.7" width="21" height="30.3" fill="#2c2c2c"/><text transform="translate(773 840.0) scale(1.29 1)" font-size="18.5" fill="#f4f4f4" textLength="10.1" lengthAdjust="spacingAndGlyphs">Y</text><text transform="translate(943.3 840.0) scale(1.29 1)" font-size="18.5" fill="#f4f4f4">253,3350</text><text transform="translate(1058.7 840.0) scale(1.29 1)" font-size="18.5" fill="#f4f4f4">248,4633</text><text transform="translate(1173.8 840.0) scale(1.29 1)" font-size="18.5" fill="#f4f4f4">244,6654</text><text transform="translate(1289 840.0) scale(1.29 1)" font-size="18.5" fill="#f4f4f4">241,5045</text><text transform="translate(1404.5 840.0) scale(1.29 1)" font-size="18.5" fill="#f4f4f4">238,5837</text><rect x="745" y="848" width="768" height="30.2" fill="#808080"/><rect x="745" y="848" width="21" height="30.2" fill="#3a3a3a"/><text transform="translate(773 870.3) scale(1.29 1)" font-size="18.5" fill="#ececec" textLength="117.8" lengthAdjust="spacingAndGlyphs">Target x:CIE31</text><text transform="translate(943.3 870.3) scale(1.29 1)" font-size="18.5" fill="#ececec">0,3352</text><text transform="translate(1058.7 870.3) scale(1.29 1)" font-size="18.5" fill="#ececec">0,3587</text><text transform="translate(1173.8 870.3) scale(1.29 1)" font-size="18.5" fill="#ececec">0,3816</text><text transform="translate(1289 870.3) scale(1.29 1)" font-size="18.5" fill="#ececec">0,4048</text><text transform="translate(1404.5 870.3) scale(1.29 1)" font-size="18.5" fill="#ececec">0,4271</text><rect x="745" y="878.2" width="768" height="30.1" fill="#404040"/><rect x="745" y="878.2" width="21" height="30.1" fill="#2c2c2c"/><text transform="translate(773 900.5) scale(1.29 1)" font-size="18.5" fill="#f4f4f4" textLength="118.6" lengthAdjust="spacingAndGlyphs">Target y:CIE31</text><text transform="translate(943.3 900.5) scale(1.29 1)" font-size="18.5" fill="#f4f4f4">0,3662</text><text transform="translate(1058.7 900.5) scale(1.29 1)" font-size="18.5" fill="#f4f4f4">0,4050</text><text transform="translate(1173.8 900.5) scale(1.29 1)" font-size="18.5" fill="#f4f4f4">0,4429</text><text transform="translate(1289 900.5) scale(1.29 1)" font-size="18.5" fill="#f4f4f4">0,4813</text><text transform="translate(1404.5 900.5) scale(1.29 1)" font-size="18.5" fill="#f4f4f4">0,5181</text><rect x="745" y="908.3" width="768" height="30.2" fill="#808080"/><rect x="745" y="908.3" width="21" height="30.2" fill="#3a3a3a"/><text transform="translate(773 930.5999999999999) scale(1.29 1)" font-size="18.5" fill="#ececec" textLength="68.6" lengthAdjust="spacingAndGlyphs">Target Y</text><text transform="translate(943.3 930.5999999999999) scale(1.29 1)" font-size="18.5" fill="#ececec">254,5531</text><text transform="translate(1058.7 930.5999999999999) scale(1.29 1)" font-size="18.5" fill="#ececec">249,8665</text><text transform="translate(1173.8 930.5999999999999) scale(1.29 1)" font-size="18.5" fill="#ececec">246,2146</text><text transform="translate(1289 930.5999999999999) scale(1.29 1)" font-size="18.5" fill="#ececec">243,1740</text><text transform="translate(1404.5 930.5999999999999) scale(1.29 1)" font-size="18.5" fill="#ececec">240,7419</text><rect x="0" y="967.5" width="1920" height="71.5" fill="#232323"/><rect x="915" y="967.8" width="648" height="71.2" fill="url(#g20)"/><rect x="915" y="967.8" width="648" height="71.2" fill="url(#hf233)"/><rect x="1.500" y="969" width="50.500" height="68.500" rx="5" fill="url(#g21)"/><circle cx="26.700" cy="978.500" r="9" fill="url(#g22)"/><path d="M21.700 981h10l-5-5.500z" fill="#222"/><rect x="7.300" y="998.500" width="39" height="34" rx="4.500" fill="#ffff00" stroke="#b8b800" stroke-width="1.2"/><rect x="59.2" y="969" width="168.800" height="68.500" rx="5" fill="url(#g21)"/><rect x="65.2" y="975.500" width="157" height="40" rx="4.500" fill="#c0c2a6" stroke="#8c8c7c" stroke-width="1.2"/><text x="143.5" y="1032.6" font-size="11.5" fill="#2a2a2a" text-anchor="middle" font-weight="bold">20%</text><rect x="230.8" y="969" width="168.800" height="68.500" rx="5" fill="url(#g21)"/><rect x="236.8" y="975.500" width="157" height="40" rx="4.500" fill="#c0c188" stroke="#8c8c7c" stroke-width="1.2"/><text x="315.1" y="1032.6" font-size="11.5" fill="#2a2a2a" text-anchor="middle" font-weight="bold">40%</text><rect x="402.4" y="969" width="168.800" height="68.500" rx="5" fill="url(#g21)"/><rect x="408.4" y="975.500" width="157" height="40" rx="4.500" fill="#c1c168" stroke="#8c8c7c" stroke-width="1.2"/><text x="486.7" y="1032.6" font-size="11.5" fill="#2a2a2a" text-anchor="middle" font-weight="bold">60%</text><rect x="574" y="969" width="168.800" height="68.500" rx="5" fill="url(#g21)"/><rect x="580" y="975.500" width="157" height="40" rx="4.500" fill="#c1c140" stroke="#8c8c7c" stroke-width="1.2"/><text x="658.3" y="1032.6" font-size="11.5" fill="#2a2a2a" text-anchor="middle" font-weight="bold">80%</text><rect x="745.6" y="969" width="168.800" height="68.500" rx="5" fill="url(#g23)"/><rect x="751.6" y="975.500" width="157" height="40" rx="4.500" fill="#c8c600" stroke="#8a8a10" stroke-width="1.2"/><text x="829.9" y="1032.6" font-size="11.5" fill="#fff" text-anchor="middle" font-weight="bold">100%</text><path d="M1563.500 988.500V974a5 5 0 0 1 5-5H1612a5 5 0 0 1 5 5V988.500z" fill="url(#g24)"/><circle cx="1590.500" cy="978.500" r="8.500" fill="url(#g22)"/><path d="M1585.500 981h10l-5-5.500z" fill="#222"/><path d="M1563.500 990H1617V1032.500a5 5 0 0 1-5 5H1568.500a5 5 0 0 1-5-5z" fill="url(#g25)"/><rect x="1574.500" y="997.800" width="31.800" height="32" rx="4" fill="#a0a0a0" stroke="#1c1c1c" stroke-width="2.5"/><rect x="1583" y="1006.8" width="15" height="15" fill="#000"/><path d="M1575.700 1014V1002a3 3 0 0 1 3-3h23.400a3 3 0 0 1 3 3V1014z" fill="#fff" opacity="0.2"/><rect x="1619.3" y="969" width="50" height="33.5" fill="url(#g26)"/><circle cx="1644.4" cy="986" r="11" fill="url(#g27)"/><rect x="1640.2" y="981.8" width="8.4" height="8.4" fill="#333333"/><rect x="1670.5" y="969" width="50.3" height="33.5" fill="url(#g26)"/><circle cx="1695.75" cy="986" r="11" fill="url(#g27)"/><path d="M1692.25 980.5l8.500 5.500-8.500 5.500z" fill="#333333"/><rect x="1722" y="969" width="49.8" height="33.5" fill="url(#g26)"/><circle cx="1747" cy="986" r="11" fill="url(#g27)"/><path d="M1744 981h-2.500v10h2.500M1750 981h2.500v10h-2.500" fill="none" stroke="#333333" stroke-width="1.7"/><circle cx="1745.5" cy="986" r="0.9" fill="#333333"/><circle cx="1748.5" cy="986" r="0.9" fill="#333333"/><rect x="1773" y="969" width="49.8" height="33.5" fill="url(#g26)"/><circle cx="1798" cy="986" r="11" fill="url(#g27)"/><path d="M1798 986c-2-3.300-7-3.300-7 0s5 3.300 7 0s7-3.300 7 0s-5 3.300-7 0z" fill="none" stroke="#333333" stroke-width="1.8"/><rect x="1824" y="969" width="49.8" height="33.5" fill="url(#g26)"/><circle cx="1849" cy="986" r="11" fill="url(#g27)"/><path d="M1843.5 985a5.500 5.500 0 0 1 9.500-3M1854.5 987a5.500 5.500 0 0 1-9.500 3" fill="none" stroke="#333333" stroke-width="2.2"/><path d="M1854.8 979.5v4.500h-4.500zM1843.2 992.5v-4.500h4.500z" fill="#333333"/><rect x="1875" y="969" width="45" height="33.5" fill="#2c2c2c"/><circle cx="1900.500" cy="986.500" r="12" fill="url(#g28)"/><path d="M1619.300 1032.500V1008.500a5 5 0 0 1 5-5H1772V1037.500H1624.300a5 5 0 0 1-5-5z" fill="url(#g29)"/><rect x="1773.2" y="1003.5" width="147" height="34" fill="url(#g29)"/><circle cx="1654" cy="1021.300" r="11" fill="url(#g27)"/><circle cx="1894.500" cy="1021.300" r="11" fill="url(#g27)"/><path d="M1653.500 1016.500l-4.500 4.800 4.500 4.800M1659 1016.500l-4.500 4.800 4.500 4.800" fill="none" stroke="#2c2c2c" stroke-width="1.7"/><path d="M1890 1016.500l4.500 4.800-4.500 4.800M1895.500 1016.500l4.500 4.800-4.500 4.800" fill="none" stroke="#2c2c2c" stroke-width="1.7"/><text x="1684" y="1030.3" font-size="25" fill="#303030" textLength="56" lengthAdjust="spacingAndGlyphs" stroke="#303030" stroke-width="0.35">Back</text><text x="1804.5" y="1030.3" font-size="25" fill="#303030" textLength="58" lengthAdjust="spacingAndGlyphs" stroke="#303030" stroke-width="0.35">Next</text>
</svg>
</body></html>
